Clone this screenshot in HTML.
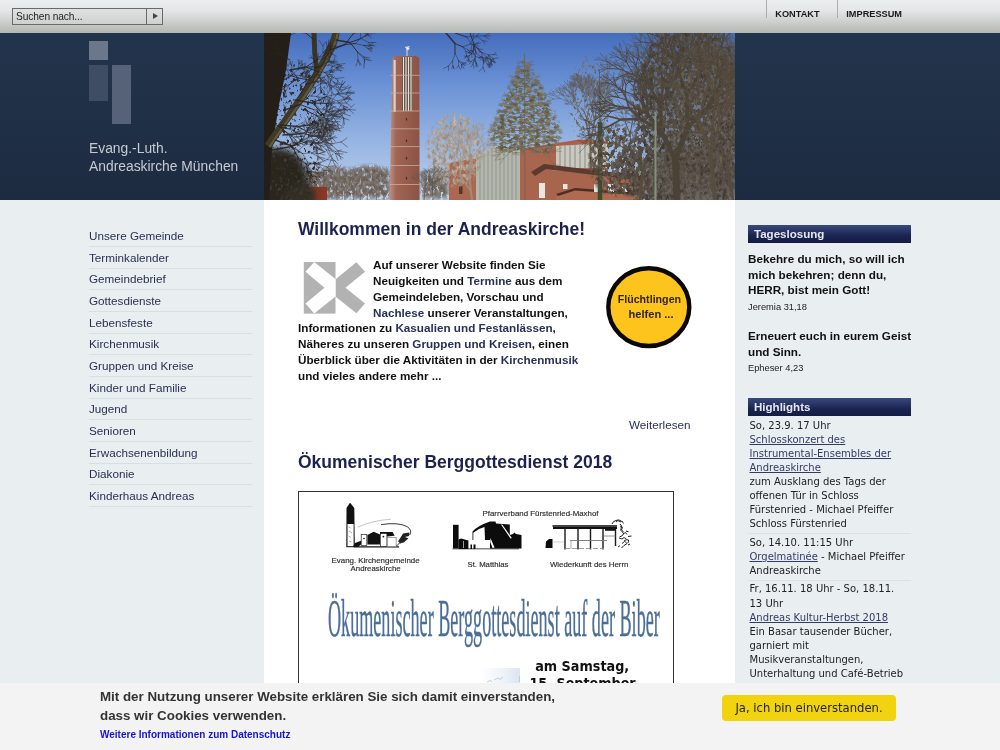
<!DOCTYPE html>
<html lang="de">
<head>
<meta charset="utf-8">
<title>Evang.-Luth. Andreaskirche München</title>
<style>
*{box-sizing:border-box;margin:0;padding:0}
html,body{width:1000px;height:750px;overflow:hidden}
body{background:#e9eef0;font-family:"Liberation Sans",Arial,sans-serif;color:#111;position:relative}
a{color:#2a3058;text-decoration:none}
#topbar{position:absolute;left:0;top:0;width:1000px;height:33px;background:linear-gradient(#ebeeef 0,#e5e8e8 30%,#d0d2d1 62%,#b5b6b3 100%)}
#search{position:absolute;left:12px;top:8px;width:151px;height:17px;border:1px solid #6a6a6a;background:linear-gradient(#e0e2e2,#cfd0d0);font-size:10.2px;line-height:15px;padding-left:3px;color:#222;letter-spacing:-.1px}
#search i{position:absolute;right:0;top:0;width:16px;height:15px;border-left:1px solid #6a6a6a}
#search i:after{content:"";position:absolute;left:6px;top:4px;border-left:5px solid #444;border-top:3.5px solid transparent;border-bottom:3.5px solid transparent}
#topnav a{position:absolute;top:0;height:18px;border-left:1px solid #acaeae;font-size:9.2px;font-weight:bold;color:#1a1a1a;line-height:28.4px;padding-left:8.3px;white-space:nowrap}
#header{position:absolute;left:0;top:33px;width:1000px;height:167px;background:linear-gradient(#22344c,#1d2b40)}
#logo div{position:absolute;background:#4a586c}
#sitename{position:absolute;left:89px;top:106.4px;font-size:13.85px;line-height:18px;color:#c5cbd3;white-space:nowrap}
#photo{position:absolute;left:264px;top:33px;width:471px;height:167px;overflow:hidden}
#main{position:absolute;left:264px;top:200px;width:471px;height:550px;background:#fff}
#nav{position:absolute;left:89px;top:225px;width:163px}
#nav a{position:absolute;left:0;width:163px;height:22px;line-height:21px;font-size:11.7px;color:#2a3052;border-bottom:1px solid #d9dee0;white-space:nowrap}
h1{position:absolute;left:298px;font-size:17.5px;font-weight:bold;color:#1b2250;white-space:nowrap;line-height:22px}
#intro{position:absolute;left:298px;top:257px;width:300px;font-size:11.7px;line-height:15.85px;font-weight:bold;color:#111}
#intro a{color:#2a3058}
#intro p{white-space:nowrap}
.side h3{position:absolute;left:748px;width:163px;height:18px;background:linear-gradient(#3a4a7c,#1a2452 60%,#141c44);color:#e6e7f1;font-size:11.55px;line-height:18px;padding-left:6px;font-weight:bold}
.los{position:absolute;left:748px;font-size:11.7px;font-weight:bold;line-height:15.7px;color:#111;white-space:nowrap}
.ref{position:absolute;left:748px;font-size:9.3px;color:#222;white-space:nowrap}
.hl{position:absolute;left:749.5px;width:161px;font-family:"DejaVu Sans",Verdana,sans-serif;font-size:10px;line-height:14.11px;color:#222;white-space:nowrap}
.hl a{color:#343a66;text-decoration:underline}
.hl hr{border:0;border-top:1px solid #dde1e3;margin:1.65px 0 1.65px -1.5px}
#cookie{position:absolute;left:0;top:683px;width:1000px;height:67px;background:#f3f3f3}
#cookie p{position:absolute;left:100px;top:4px;font-size:13.35px;font-weight:bold;line-height:19px;color:#333;white-space:nowrap}
#cookie a{position:absolute;left:100px;top:45.5px;font-size:10px;font-weight:bold;color:#1414d8;white-space:nowrap}
#cookie b{position:absolute;left:722px;top:12px;width:174px;height:26px;border-radius:4px;background:#f2d30f;font-family:"DejaVu Sans",sans-serif;font-weight:normal;font-size:11.6px;line-height:26px;text-align:center;color:#222}
#flyer{position:absolute;left:298px;top:491px;width:376px;height:200px;border:1px solid #333;border-bottom:0;background:#fff;overflow:hidden}
#wrap{position:absolute;left:0;top:0;width:1000px;height:750px;will-change:transform}
</style>
</head>
<body>
<div id="wrap">
<div id="topbar">
  <div id="search">Suchen nach...<i></i></div>
  <div id="topnav"><a style="left:766px">KONTAKT</a><a style="left:837px">IMPRESSUM</a></div>
</div>
<div id="header">
  <div id="logo"><div style="left:89px;top:8px;width:19px;height:19px;background:#6b778a"></div><div style="left:89px;top:31.5px;width:19px;height:36px;background:#3e4d63"></div><div style="left:112px;top:31.5px;width:19px;height:59px;background:#566277"></div></div>
  <div id="sitename">Evang.-Luth.<br>Andreaskirche München</div>
</div>
<!--PHOTO--><svg id="photo" width="471" height="167" viewBox="264 33 471 167" style="position:absolute;left:264px;top:33px">
<defs><linearGradient id="sky" x1="0" y1="0" x2="0" y2="1"><stop offset="0" stop-color="#446dbc"/><stop offset=".3" stop-color="#6a91d5"/><stop offset=".65" stop-color="#97b5e3"/><stop offset="1" stop-color="#bdd1ec"/></linearGradient><filter id="bl3" x="-20%" y="-20%" width="140%" height="140%"><feGaussianBlur stdDeviation="3"/></filter><filter id="bl6" x="-30%" y="-30%" width="160%" height="160%"><feGaussianBlur stdDeviation="7"/></filter><linearGradient id="tw" x1="0" y1="0" x2="1" y2="0"><stop offset="0" stop-color="#bd917f"/><stop offset=".22" stop-color="#a06554"/><stop offset="1" stop-color="#8c5243"/></linearGradient>
<filter id="tBrown" x="-15%" y="-15%" width="130%" height="130%" color-interpolation-filters="sRGB"><feGaussianBlur in="SourceAlpha" stdDeviation="4" result="m"/><feTurbulence type="fractalNoise" baseFrequency="0.26 0.19" numOctaves="3" seed="4" result="n"/><feColorMatrix in="n" type="matrix" values="0 0 0.3 0 0.2 0 0 0.3 0 0.165 0 0 0.3 0 0.125 0 0 0 0 1" result="c"/><feColorMatrix in="n" type="matrix" values="0 0 0 0 0 0 0 0 0 0 0 0 0 0 0 0 9 0 0 -3.8" result="a"/><feComposite in="a" in2="m" operator="arithmetic" k1="0" k2="1" k3="2.5" k4="-2.5" result="a2"/><feComposite in="c" in2="a2" operator="in"/></filter>
<filter id="tDense" x="-15%" y="-15%" width="130%" height="130%" color-interpolation-filters="sRGB"><feGaussianBlur in="SourceAlpha" stdDeviation="5" result="m"/><feTurbulence type="fractalNoise" baseFrequency="0.26 0.19" numOctaves="3" seed="9" result="n"/><feColorMatrix in="n" type="matrix" values="0 0 0.27 0 0.17 0 0 0.27 0 0.145 0 0 0.27 0 0.12 0 0 0 0 1" result="c"/><feColorMatrix in="n" type="matrix" values="0 0 0 0 0 0 0 0 0 0 0 0 0 0 0 0 10 0 0 -3.9" result="a"/><feComposite in="a" in2="m" operator="arithmetic" k1="0" k2="1" k3="3" k4="-3.0" result="a2"/><feComposite in="c" in2="a2" operator="in"/></filter>
<filter id="tLight" x="-15%" y="-15%" width="130%" height="130%" color-interpolation-filters="sRGB"><feGaussianBlur in="SourceAlpha" stdDeviation="3" result="m"/><feTurbulence type="fractalNoise" baseFrequency="0.3 0.2" numOctaves="3" seed="5" result="n"/><feColorMatrix in="n" type="matrix" values="0 0 0.35 0 0.5 0 0 0.35 0 0.45 0 0 0.35 0 0.4 0 0 0 0 1" result="c"/><feColorMatrix in="n" type="matrix" values="0 0 0 0 0 0 0 0 0 0 0 0 0 0 0 0 5 0 0 -1.85" result="a"/><feComposite in="a" in2="m" operator="arithmetic" k1="0" k2="1" k3="1.5" k4="-1.5" result="a2"/><feComposite in="c" in2="a2" operator="in"/></filter>
<filter id="tOlive" x="-15%" y="-15%" width="130%" height="130%" color-interpolation-filters="sRGB"><feGaussianBlur in="SourceAlpha" stdDeviation="3" result="m"/><feTurbulence type="fractalNoise" baseFrequency="0.2 0.3" numOctaves="3" seed="6" result="n"/><feColorMatrix in="n" type="matrix" values="0 0 0.35 0 0.28 0 0 0.35 0 0.26 0 0 0.35 0 0.18 0 0 0 0 1" result="c"/><feColorMatrix in="n" type="matrix" values="0 0 0 0 0 0 0 0 0 0 0 0 0 0 0 0 7 0 0 -2.7" result="a"/><feComposite in="a" in2="m" operator="arithmetic" k1="0" k2="1" k3="2" k4="-2.0" result="a2"/><feComposite in="c" in2="a2" operator="in"/></filter>
<filter id="tGray" x="-15%" y="-15%" width="130%" height="130%" color-interpolation-filters="sRGB"><feGaussianBlur in="SourceAlpha" stdDeviation="3" result="m"/><feTurbulence type="fractalNoise" baseFrequency="0.3 0.22" numOctaves="3" seed="7" result="n"/><feColorMatrix in="n" type="matrix" values="0 0 0.3 0 0.32 0 0 0.3 0 0.28 0 0 0.3 0 0.25 0 0 0 0 1" result="c"/><feColorMatrix in="n" type="matrix" values="0 0 0 0 0 0 0 0 0 0 0 0 0 0 0 0 6 0 0 -1.6" result="a"/><feComposite in="a" in2="m" operator="arithmetic" k1="0" k2="1" k3="1.5" k4="-1.5" result="a2"/><feComposite in="c" in2="a2" operator="in"/></filter>
<filter id="tDark" x="-15%" y="-15%" width="130%" height="130%" color-interpolation-filters="sRGB"><feGaussianBlur in="SourceAlpha" stdDeviation="4" result="m"/><feTurbulence type="fractalNoise" baseFrequency="0.3 0.24" numOctaves="3" seed="8" result="n"/><feColorMatrix in="n" type="matrix" values="0 0 0.25 0 0.08 0 0 0.25 0 0.07 0 0 0.25 0 0.07 0 0 0 0 1" result="c"/><feColorMatrix in="n" type="matrix" values="0 0 0 0 0 0 0 0 0 0 0 0 0 0 0 0 9 0 0 -5.0" result="a"/><feComposite in="a" in2="m" operator="arithmetic" k1="0" k2="1" k3="2.5" k4="-2.5" result="a2"/><feComposite in="c" in2="a2" operator="in"/></filter>
<filter id="tThin" x="-15%" y="-15%" width="130%" height="130%" color-interpolation-filters="sRGB"><feGaussianBlur in="SourceAlpha" stdDeviation="3" result="m"/><feTurbulence type="fractalNoise" baseFrequency="0.34 0.26" numOctaves="3" seed="12" result="n"/><feColorMatrix in="n" type="matrix" values="0 0 0.3 0 0.3 0 0 0.3 0 0.27 0 0 0.3 0 0.25 0 0 0 0 1" result="c"/><feColorMatrix in="n" type="matrix" values="0 0 0 0 0 0 0 0 0 0 0 0 0 0 0 0 8 0 0 -4.3" result="a"/><feComposite in="a" in2="m" operator="arithmetic" k1="0" k2="1" k3="2" k4="-2.0" result="a2"/><feComposite in="c" in2="a2" operator="in"/></filter>
</defs>
<rect x="264" y="33" width="471" height="167" fill="url(#sky)"/>
<g filter="url(#tGray)"><path d="M300 200L305 175Q330 160 350 168Q375 158 392 172L392 200Z"/><path d="M420 200V175Q432 165 450 172V200Z"/></g>
<g fill="none" stroke="#6e6258" stroke-linecap="round" opacity="0.7"><path stroke-width="1.0" d="M312 200l-0.5 -12.5M320 200l-0.5 -9.5M326.5 200l-0.5 -9.5M337 200l-0.5 -12M345 200l-1 -11.5M353.5 200l0.5 -9.5M360.5 200l-0.5 -12M367.5 200l-0.5 -9M376.5 200l0 -11M384 200l-1.5 -12"/><path stroke-width="0.5" d="M311.5 187.5l4.5 -9.5M316 178l6.5 -4M322.5 174l5 0.5M322.5 174l4 -4.5M316 178l-0.5 -6M315.5 172l1.5 -5M315.5 172l0 -4M315.5 172l-1.5 -4.5M311.5 187.5l1 -8.5M312.5 179l3.5 -5M316 174l4.5 -3M316 174l2.5 -4.5M316 174l0.5 -5M312.5 179l-1.5 -5M311 174l0.5 -3.5M311 174l-2 -3M311.5 187.5l-3 -9.5M308.5 178l1.5 -6.5M310 171.5l3 -5M310 171.5l0 -4.5M308.5 178l-3.5 -6.5M305 171.5l0.5 -5.5M305 171.5l-1.5 -5.5M305 171.5l-3.5 -3.5M308.5 178l-4 -6M304.5 172l0 -5.5M304.5 172l-4 -3M319.5 190.5l1.5 -7.5M321 183l3 -4M324 179l2.5 -2M324 179l2 -3.5M324 179l0.5 -4M321 183l2 -5M323 178l3 -1.5M323 178l0 -2.5M321 183l-1.5 -6.5M319.5 176.5l1.5 -3.5M319.5 176.5l-1 -3.5M319.5 176.5l-3 -3M319.5 190.5l-4 -7.5M315.5 183l-0.5 -5M315 178l1 -3M315 178l-1.5 -4M315 178l-2 -3M315.5 183l-3.5 -5.5M312 177.5l-1 -5M312 177.5l-3.5 -2.5M315.5 183l-3.5 -3.5M312 179.5l-1 -4M312 179.5l-2.5 -3M312 179.5l-3 -1M326 190.5l3 -6.5M329 184l4.5 -3.5M333.5 180.5l3.5 -0.5M333.5 180.5l2 -3M329 184l0.5 -4.5M329.5 179.5l2 -2M329.5 179.5l-1 -3M326 190.5l-3.5 -5.5M322.5 185l-1 -5.5M321.5 179.5l0.5 -4M321.5 179.5l-1 -3M321.5 179.5l-2.5 -3M322.5 185l-4.5 -2M318 183l-1.5 -2.5M318 183l-3.5 0.5M336.5 188l4 -8.5M340.5 179.5l4.5 -5M345 174.5l4 -2M345 174.5l1 -4M340.5 179.5l-0.5 -7M340 172.5l2.5 -4M340 172.5l-2 -4.5M336.5 188l0 -10.5M336.5 177.5l3.5 -7M340 170.5l5 -3.5M340 170.5l0.5 -5M336.5 177.5l1 -8M337.5 169.5l4 -5.5M337.5 169.5l-2 -5.5M336.5 177.5l-2 -6.5M334.5 171l1 -5M334.5 171l-3.5 -4M336.5 188l-4 -7M332.5 181l-0.5 -5M332 176l0.5 -4M332 176l0 -3.5M332 176l-2 -4M332.5 181l-2 -4.5M330.5 176.5l-0.5 -4M330.5 176.5l-2 -4M330.5 176.5l-2.5 -2.5M332.5 181l-4.5 -3M328 178l-2 -3M328 178l-4 -1M344 188.5l3 -6M347 182.5l3.5 -3M350.5 179.5l4 -0.5M350.5 179.5l2.5 -1M350.5 179.5l1.5 -2.5M347 182.5l0 -4.5M347 178l1 -3.5M347 178l-1 -2.5M344 188.5l-1 -8.5M343 180l1 -6.5M344 173.5l2.5 -4M344 173.5l-1.5 -5M343 180l-1 -5.5M342 174.5l1.5 -3M342 174.5l-2 -3M343 180l-4 -6M339 174l-1.5 -5M339 174l-2.5 -4M339 174l-4.5 -1.5M344 188.5l-4 -6.5M340 182l0 -5.5M340 176.5l1.5 -3.5M340 176.5l0 -4M340 176.5l-2.5 -3M340 182l-4 -2M336 180l-3 -3M336 180l-3.5 -2M336 180l-4 -0.5M354 190.5l3 -5.5M357 185l3.5 -2M360.5 183l2.5 0M360.5 183l1.5 -2.5M357 185l2 -4M359 181l2.5 -2.5M359 181l1 -3M359 181l0.5 -3.5M357 185l1 -5M358 180l2.5 -3.5M358 180l-1 -3M354 190.5l0.5 -7.5M354.5 183l2.5 -4M357 179l3 -1.5M357 179l2 -2.5M357 179l0.5 -2.5M354.5 183l-3 -4.5M351.5 178.5l-0.5 -4.5M351.5 178.5l-1 -3M351.5 178.5l-3.5 -3M354 190.5l-3 -7M351 183.5l0.5 -5.5M351.5 178l3 -3.5M351.5 178l-2 -4M351 183.5l-2 -4.5M349 179l0 -4M349 179l-1 -3.5M349 179l-2 -2.5M351 183.5l-4.5 -4.5M346.5 179l-1 -3.5M346.5 179l-2.5 -3M346.5 179l-4.5 -1.5M360 188l4.5 -7.5M364.5 180.5l6 -4M370.5 176.5l6 -0.5M370.5 176.5l3 -5M364.5 180.5l1.5 -6.5M366 174l2 -4.5M366 174l1.5 -6M366 174l-1 -6M360 188l-1.5 -7M358.5 181l1.5 -4.5M360 176.5l3 -2M360 176.5l1.5 -3M360 176.5l0 -3M358.5 181l-3 -3.5M355.5 177.5l-1 -3M355.5 177.5l-3 -0.5M360 188l-5 -7M355 181l-1 -7M354 174l1 -5M354 174l-2.5 -5M355 181l-4.5 -6M350.5 175l0 -5M350.5 175l-3 -5.5M350.5 175l-6 -2M355 181l-4.5 -3.5M350.5 177.5l-1 -3.5M350.5 177.5l-3 -2.5M350.5 177.5l-3.5 -1M367 191l3.5 -6M370.5 185l3.5 -2M374 183l3.5 0M374 183l1.5 -2M370.5 185l2 -4.5M372.5 180.5l2.5 -2.5M372.5 180.5l1.5 -3.5M372.5 180.5l-0.5 -3.5M370.5 185l1 -5M371.5 180l2 -3M371.5 180l-1.5 -3.5M367 191l-3.5 -6.5M363.5 184.5l-0.5 -5.5M363 179l1 -3.5M363 179l-2 -4M363.5 184.5l-5.5 -2M358 182.5l-3 -4M358 182.5l-4.5 0.5M376.5 189l3.5 -7.5M380 181.5l4.5 -4.5M384.5 177l3.5 -0.5M384.5 177l2 -4M380 181.5l-0.5 -6.5M379.5 175l2.5 -3M379.5 175l0.5 -4M379.5 175l-2 -3.5M376.5 189l-0.5 -9M376 180l3 -7M379 173l4 -3.5M379 173l-1.5 -5M376 180l-3.5 -5M372.5 175l-1.5 -4.5M372.5 175l-4 -2M376.5 189l-3.5 -6.5M373 182.5l0 -5.5M373 177l1 -3M373 177l-1 -3.5M373 177l-2 -2.5M373 182.5l-3 -5M370 177.5l0 -4M370 177.5l-2.5 -2.5M373 182.5l-4 -3.5M369 179l-1.5 -4.5M369 179l-3 -3M369 179l-4 -0.5M382.5 188l4.5 -9M387 179l5 -4M392 175l3.5 -0.5M392 175l3.5 -2M392 175l2 -3.5M387 179l-0.5 -7M386.5 172l2 -5M386.5 172l0 -5.5M386.5 172l-2.5 -3.5M382.5 188l0 -7M382.5 181l3 -5.5M385.5 175.5l4 -2M385.5 175.5l2 -4M385.5 175.5l0.5 -4M382.5 181l0 -6.5M382.5 174.5l1.5 -3.5M382.5 174.5l-1 -4M382.5 181l-3 -5M379.5 176l0.5 -4M379.5 176l-3.5 -2.5M382.5 188l-3.5 -7M379 181l0 -5M379 176l2.5 -3.5M379 176l0 -3.5M379 176l-1 -4M379 181l-2.5 -5M376.5 176l-0.5 -5M376.5 176l-3.5 -2.5M379 181l-4 -4M375 177l-1.5 -5M375 177l-3.5 -2.5M375 177l-4.5 -1.5"/></g>
<rect x="304" y="187" width="23" height="13" fill="#8b3626"/>
<polygon points="392.5,58 396,56 416,56 419.3,58 419.6,200 389.6,200" fill="url(#tw)"/>
<rect x="393.5" y="60" width="2.2" height="52" fill="#e6dcd2" opacity=".9"/>
<rect x="402" y="57" width="10" height="54" fill="#5a4a40"/>
<path d="M403.5 57V111M406 57V111M408.5 57V111M411 57V111" stroke="#e8e4dc" stroke-width="1.2"/>
<path d="M390.5 75.3H419.5M390.5 93H419.5M390.5 111H419.5M390.3 128.8H419.5M390 146.6H419.5M390 165.5H419.5M389.8 184.5H419.5" stroke="#cdb5a5" stroke-width=".9" opacity=".8"/>
<path d="M406.5 118v2.5M406.5 139.5v2.5M406.5 157v2.5M406.5 177v2.5" stroke="#4a2e26" stroke-width="1.2"/>
<path d="M407 56V47M405 47.5L409.5 46.5" stroke="#ddd" stroke-width="1"/><circle cx="407.8" cy="48.5" r="1.6" fill="#e8e8e0"/>
<polygon points="449,163 476,158 476,200 449,200" fill="#ab6850"/>
<polygon points="476,158 493,146 520,150 520,200 476,200" fill="#b4b7ae"/>
<path d="M480 156V200M484 153V200M488 150V200M492 148V200M496 148V200M500 148V200M504 149V200M508 149V200M512 150V200M516 150V200" stroke="#8f948c" stroke-width="1"/>
<polygon points="520,150 545,146 580,140 608,142 608,170 520,170" fill="#a9664e"/>
<polygon points="556,146 608,143 608,168 556,168" fill="#c9c9c1"/>
<path d="M560 146V168M565 146V168M570 145V168M575 145V168M580 145V168M585 144V168M590 144V168M595 144V168M600 144V168M605 144V168" stroke="#9a9a92" stroke-width="1.3"/>
<path d="M520 150L545 146L580 140.5L608 142.5" stroke="#b5583c" stroke-width="2" fill="none"/>
<polygon points="520,168 642,176 642,200 520,200" fill="#a8644c"/>
<polygon points="531,172 544,164 642,176 642,181 546,169 535,176" fill="#5b3a30"/>
<polygon points="556,194 575,188 642,194 642,200 556,200" fill="#b06a50"/>
<polygon points="556,194 575,188 642,193 642,195.5 575,190.5 558,196" fill="#4a2f28"/>
<rect x="539" y="183" width="6" height="15" fill="#e8e6e0"/><rect x="563" y="184" width="4.5" height="5" fill="#e8e6e0"/><rect x="608" y="184" width="6" height="8" fill="#ddd"/><rect x="622" y="184" width="5" height="8" fill="#ddd"/><rect x="594" y="184" width="4" height="8" fill="#ddd"/>
<rect x="459" y="186" width="3.5" height="8" fill="#5a3528"/>
<g filter="url(#tLight)"><ellipse cx="455" cy="150" rx="30" ry="38"/></g>
<g fill="none" stroke="#a09384" stroke-linecap="round" opacity="0.85"><path stroke-width="2.0" d="M472 200l-2.5 -22"/><path stroke-width="1.5" d="M469.5 178l3.5 -13.5M469.5 178l1 -18.5M469.5 178l-7 -15.5M470 190l-9 -13"/><path stroke-width="1.0" d="M473 164.5l7 -7.5M473 164.5l-3.5 -10.5M470.5 159.5l9.5 -12M470.5 159.5l-1.5 -14.5M470.5 159.5l-5.5 -10.5M462.5 162.5l1.5 -13M462.5 162.5l-9.5 -10.5M461 177l-0.5 -11M461 177l-11 -4.5"/><path stroke-width="0.5" d="M480 157l8 -2.5M488 154.5l7 1.5M495 156l4.5 3.5M495 156l5 -1.5M488 154.5l3.5 -4.5M491.5 150l3.5 -1.5M491.5 150l2.5 -3.5M491.5 150l0.5 -5M480 157l4 -6.5M484 150.5l4.5 -2.5M488.5 148l4.5 0.5M488.5 148l3 -3M484 150.5l3.5 -5.5M487.5 145l3.5 -2.5M487.5 145l2 -4M487.5 145l1 -4.5M484 150.5l0 -5M484 145.5l1.5 -3M484 145.5l-1 -3.5M480 157l3.5 -8M483.5 149l6 -3.5M489.5 145.5l4 0M489.5 145.5l2.5 -3.5M483.5 149l4 -6M487.5 143l4.5 -3M487.5 143l1 -4M483.5 149l-1 -6.5M482.5 142.5l2 -4.5M482.5 142.5l-1.5 -5M482.5 142.5l-2.5 -4M469.5 154l2 -9M471.5 145l3.5 -6M475 139l5 -4.5M475 139l0 -6M471.5 145l0.5 -7M472 138l3 -6M472 138l1 -5M472 138l-2 -5.5M471.5 145l-1.5 -6M470 139l1.5 -5.5M470 139l-1 -5M470 139l-2.5 -3.5M469.5 154l-7.5 -5.5M462 148.5l-2 -6.5M460 142l1 -4.5M460 142l-3.5 -4M462 148.5l-5.5 -4M456.5 144.5l-3 -5M456.5 144.5l-6 -1M462 148.5l-7 0M455 148.5l-5 -2M455 148.5l-6.5 -0.5M455 148.5l-5.5 3M480 147.5l11 -7.5M491 140l8 -2M499 138l6.5 1M499 138l3.5 -4.5M491 140l8 -4.5M499 135.5l7.5 0M499 135.5l5 -6M491 140l3 -8M494 132l4 -3M494 132l2 -5M494 132l0.5 -7M480 147.5l7.5 -7.5M487.5 140l8 -2M495.5 138l6 1M495.5 138l5.5 -3M487.5 140l5 -5.5M492.5 134.5l5 -2M492.5 134.5l1 -4.5M487.5 140l1.5 -6.5M489 133.5l2.5 -3.5M489 133.5l0 -4.5M489 133.5l-1 -4M480 147.5l3 -11.5M483 136l6.5 -6.5M489.5 129.5l7 -2.5M489.5 129.5l2 -7.5M483 136l-0.5 -8.5M482.5 127.5l2 -5.5M482.5 127.5l0 -5M482.5 127.5l-4 -5.5M469 145l5 -9.5M474 135.5l5.5 -6M479.5 129.5l5.5 -1M479.5 129.5l1.5 -5.5M474 135.5l2 -7.5M476 128l4 -4M476 128l3 -5.5M476 128l0 -6M474 135.5l0.5 -6.5M474.5 129l2.5 -5M474.5 129l-1 -4.5M469 145l-4 -8.5M465 136.5l0 -6.5M465 130l1 -4M465 130l0 -4.5M465 130l-3 -4M465 136.5l-4 -6M461 130.5l-0.5 -5M461 130.5l-3 -4M461 130.5l-5 -2M465 136.5l-4.5 -4.5M460.5 132l-1.5 -3.5M460.5 132l-3 -3M460.5 132l-5 -0.5M465 149l0 -8.5M465 140.5l2 -5M467 135.5l2.5 -2M467 135.5l-0.5 -4.5M465 140.5l-2.5 -5.5M462.5 135l0.5 -4.5M462.5 135l-2 -4M462.5 135l-3 -3M465 149l-4.5 -6M460.5 143l-1 -5.5M459.5 137.5l0.5 -3M459.5 137.5l-1 -3M459.5 137.5l-2.5 -2M460.5 143l-6 -3M454.5 140l-3.5 -4M454.5 140l-4.5 0M465 149l-9 -5M456 144l-4 -7M452 137l-0.5 -6.5M452 137l-2.5 -4.5M452 137l-4 -3M456 144l-6.5 -0.5M449.5 143.5l-4 -3M449.5 143.5l-5 -0.5M449.5 143.5l-4.5 2M464 149.5l5 -7.5M469 142l5.5 -4M474.5 138l5.5 -1.5M474.5 138l4 -3M474.5 138l2.5 -5.5M469 142l3.5 -6M472.5 136l3.5 -2M472.5 136l2 -4.5M472.5 136l0.5 -5M469 142l1 -6.5M470 135.5l2.5 -5M470 135.5l1 -5M470 135.5l-1.5 -5M464 149.5l-5 -8M459 141.5l-0.5 -6.5M458.5 135l1.5 -5M458.5 135l-1 -5M458.5 135l-3 -4M459 141.5l-6 -4M453 137.5l-2 -5.5M453 137.5l-6 -0.5M453 152l-4 -10M449 142l1.5 -7M450.5 135l3.5 -3M450.5 135l1.5 -5M450.5 135l-1 -4.5M449 142l-3.5 -6.5M445.5 135.5l1 -6M445.5 135.5l-2 -5M445.5 135.5l-5.5 -3M449 142l-5.5 -4.5M443.5 137.5l-3 -5M443.5 137.5l-3.5 -4M443.5 137.5l-6 -1M453 152l-9.5 -5.5M443.5 146.5l-4 -6.5M439.5 140l-1 -5M439.5 140l-6 -2M443.5 146.5l-8 -1M435.5 145.5l-5 -4.5M435.5 145.5l-5 2.5M460.5 166l4 -8M464.5 158l5 -4M469.5 154l4 -1M469.5 154l2.5 -4.5M464.5 158l3 -5.5M467.5 152.5l3 -2M467.5 152.5l-1 -3.5M464.5 158l-0.5 -5M464 153l1.5 -4M464 153l-0.5 -3.5M464 153l-2.5 -3M460.5 166l-3.5 -8.5M457 157.5l1 -7M458 150.5l4 -5.5M458 150.5l-1 -4.5M457 157.5l-5 -2.5M452 155l-2 -4M452 155l-4 -1M450 172.5l-7 -7.5M443 165l-1.5 -6M441.5 159l0.5 -4.5M441.5 159l-2 -5M441.5 159l-3.5 -3.5M443 165l-7 -1.5M436 163.5l-3.5 -4.5M436 163.5l-5.5 -1M436 163.5l-4.5 1.5M450 172.5l-7.5 -0.5M442.5 172l-5 -2M437.5 170l-2.5 -2.5M437.5 170l-3 -2M437.5 170l-4 0.5M442.5 172l-5.5 0.5M437 172.5l-3 -2M437 172.5l-4 1.5M442.5 172l-4.5 2M438 174l-4 -0.5M438 174l-3 1M438 174l-3 3"/></g>
<g fill="none" stroke="#5d554c" stroke-linecap="round" opacity="0.8"><path stroke-width="1.0" d="M433 200l-0.5 -12M432.5 188l4.5 -7M432.5 188l0 -8.5M432.5 188l-3 -7M424 200l1 -10"/><path stroke-width="0.5" d="M437 181l5 -4M442 177l5.5 -0.5M447.5 176.5l3 1.5M447.5 176.5l2.5 -1.5M442 177l3 -4.5M445 172.5l3.5 -1.5M445 172.5l0.5 -4.5M437 181l2.5 -6M439.5 175l3 -2.5M442.5 172.5l2.5 -0.5M442.5 172.5l1.5 -2.5M439.5 175l-1 -5.5M438.5 169.5l1.5 -3M438.5 169.5l-2 -2.5M437 181l1 -6.5M438 174.5l2.5 -3.5M440.5 171l3.5 -2M440.5 171l1 -3M438 174.5l-0.5 -4.5M437.5 170l1 -3.5M437.5 170l-2.5 -3M432.5 179.5l1.5 -5.5M434 174l2 -2.5M436 171.5l2.5 -0.5M436 171.5l2 -1M436 171.5l1 -2M434 174l0.5 -4M434.5 170l1.5 -2M434.5 170l0 -3.5M434.5 170l-0.5 -3M434 174l-1 -3.5M433 170.5l0 -2.5M433 170.5l-1 -2M433 170.5l-1.5 -2M432.5 179.5l-3 -5M429.5 174.5l-0.5 -4M429 170.5l1.5 -2M429 170.5l-1 -2M429.5 174.5l-3.5 -3M426 171.5l-1 -3M426 171.5l-2.5 -3M426 171.5l-3 -1M429.5 181l0 -5M429.5 176l1.5 -2.5M431 173.5l2 -1.5M431 173.5l0.5 -2.5M429.5 176l0 -3.5M429.5 172.5l1 -2.5M429.5 172.5l-1.5 -2.5M429.5 176l-2 -3.5M427.5 172.5l-0.5 -2.5M427.5 172.5l-2 -1M429.5 181l-2.5 -4.5M427 176.5l0 -4.5M427 172l2 -2M427 172l-1 -2.5M427 176.5l-2 -3M425 173.5l-0.5 -3M425 173.5l-2 -1.5M427 176.5l-3 -3M424 173.5l-1.5 -2.5M424 173.5l-2.5 -2.5M424 173.5l-3 -1.5M429.5 181l-4 -4M425.5 177l-1 -3.5M424.5 173.5l1 -2M424.5 173.5l-0.5 -2.5M424.5 173.5l-1.5 -2M425.5 177l-3 -2.5M422.5 174.5l-1.5 -3M422.5 174.5l-2 -2M422.5 174.5l-3 -0.5M425.5 177l-3.5 -1M422 176l-2 -2M422 176l-2.5 -1.5M422 176l-3.5 0M425 190l4 -5M429 185l4 -1.5M433 183.5l2.5 0.5M433 183.5l2.5 -2M429 185l2.5 -2.5M431.5 182.5l2.5 -0.5M431.5 182.5l1.5 -2.5M431.5 182.5l1.5 -2.5M429 185l0.5 -4.5M429.5 180.5l1.5 -2.5M429.5 180.5l1 -4M429.5 180.5l-1 -3.5M425 190l1 -6M426 184l3.5 -3.5M429.5 180.5l3 -1.5M429.5 180.5l2.5 -2.5M429.5 180.5l1 -3.5M426 184l-1 -4.5M425 179.5l0 -3.5M425 179.5l-3 -2.5M425 190l-4 -7.5M421 182.5l1 -5.5M422 177l2.5 -3.5M422 177l0.5 -4M422 177l-1 -4M421 182.5l-3 -5M418 177.5l-1 -4.5M418 177.5l-2.5 -3.5M418 177.5l-4 -3.5M421 182.5l-5.5 -3.5M415.5 179l-2.5 -3M415.5 179l-4 -2M415.5 179l-4 -1"/></g>
<g filter="url(#tOlive)"><polygon points="524,52 500,98 486,136 498,156 552,156 566,134 548,92"/></g>
<g fill="none" stroke="#6a614c" stroke-linecap="round" opacity="0.75"><path stroke-width="1.0" d="M525 200l-0.5 -146M524.5 61.5l-3.5 0.5M524.5 62.5l4 0.5M524.5 65.5l-3 1M524.5 65l3.5 0M524.5 69.5l-4 0M524.5 71l4 0.5M524.5 73l-5 1M524.5 74.5l4.5 0.5M524.5 78.5l-7 0M524.5 78.5l7 0.5M524.5 82l-5 0.5M524.5 83.5l7 0.5M524.5 86.5l-7 0M524.5 87l7.5 0M524.5 93.5l-8 2.5M524.5 93.5l9 2M524.5 97l-8 2.5M524.5 96.5l10.5 1M524.5 99l-9.5 -0.5M524.5 101.5l8.5 0M524.5 104l-9.5 -0.5M524.5 104l12 2.5M524.5 110l-9 0M524.5 108.5l10.5 3.5M524.5 112l-10.5 2M524.5 112.5l14 1M524.5 117.5l-10 -0.5M524.5 115.5l14.5 3.5M524.5 123l-14 2M524.5 122l10 3M524.5 127.5l-14.5 1M524.5 125.5l11.5 3.5M524.5 130.5l-14 0M524.5 130l12 1M524.5 135l-17.5 0M524.5 134.5l16 1.5M524.5 138l-16 5.5M524.5 138l12.5 4.5M524.5 144l-17 4.5M524.5 142.5l13 3.5M524.5 147l-13.5 4.5M524.5 148.5l19 4.5"/><path stroke-width="0.5" d="M521 62l-2.5 -0.5M518.5 61.5l-1 -1M518.5 61.5l-1.5 0.5M521 62l-2 1.5M519 63.5l-2 0M519 63.5l-1 1M528.5 63l3 1.5M531.5 64.5l1 1.5M531.5 64.5l2.5 0M528.5 63l2.5 -1M531 62l2 0M531 62l1 -1.5M521.5 66.5l-3 -0.5M518.5 66l-1.5 -0.5M518.5 66l-1.5 1M521.5 66.5l-2 1M519.5 67.5l-1 0.5M519.5 67.5l-0.5 1.5M528 65l1.5 1M529.5 66l1 1M529.5 66l1.5 0M528 65l2 -0.5M530 64.5l1 0M530 64.5l1 -1M520.5 69.5l-3 -1M517.5 68.5l-1.5 -1.5M517.5 68.5l-2 0M520.5 69.5l-2.5 1M518 70.5l-2 -0.5M518 70.5l-1 1M528.5 71.5l3 1M531.5 72.5l1.5 1.5M531.5 72.5l2.5 0M528.5 71.5l3.5 -1.5M532 70l2 0.5M532 70l2 -1.5M519.5 74l-3 -0.5M516.5 73.5l-1.5 -1M516.5 73.5l-1.5 0M519.5 74l-2.5 2M517 76l-2.5 0.5M517 76l-1.5 2M529 75l2.5 2M531.5 77l0.5 1.5M531.5 77l1.5 0.5M529 75l3 0M532 75l2 0.5M532 75l2 -1M517.5 78.5l-5 -1.5M512.5 77l-2.5 -2M512.5 77l-4 0M517.5 78.5l-4.5 3M513 81.5l-3.5 0.5M513 81.5l-2.5 3M531.5 79l4.5 1.5M536 80.5l2.5 3M536 80.5l3.5 0M531.5 79l5 -2M536.5 77l3.5 0M536.5 77l3.5 -2.5M519.5 82.5l-3.5 0M516 82.5l-1.5 -1M516 82.5l-1.5 0.5M519.5 82.5l-3.5 2M516 84.5l-2 0.5M516 84.5l-1 2M531.5 84l5.5 1.5M537 85.5l2.5 1.5M537 85.5l3.5 -1M531.5 84l5.5 -1.5M537 82.5l3 0.5M537 82.5l3 -2M517.5 86.5l-4 -1M513.5 85.5l-3 -1.5M513.5 85.5l-3.5 1M517.5 86.5l-4 2.5M513.5 89l-2.5 0M513.5 89l-1.5 3M532 87l4 3M536 90l2.5 2M536 90l3.5 0M532 87l5 -2M537 85l4.5 -0.5M537 85l3 -3M516.5 96l-5.5 0M511 96l-3.5 -1.5M511 96l-3.5 1M516.5 96l-5 3.5M511.5 99.5l-3 0.5M511.5 99.5l-2 2.5M533.5 95.5l4.5 4.5M538 100l2 4.5M538 100l3.5 2M533.5 95.5l5.5 0M539 95.5l3 2M539 95.5l4 -1M516.5 99.5l-6.5 -0.5M510 99l-3.5 -2M510 99l-4 0.5M516.5 99.5l-5.5 4.5M511 104l-3.5 1M511 104l-1.5 3M535 97.5l5.5 3M540.5 100.5l2.5 3M540.5 100.5l4 0M535 97.5l6.5 -1.5M541.5 96l5 -0.5M541.5 96l3.5 -3.5M515 98.5l-6 -2.5M509 96l-4.5 -3M509 96l-5 0M515 98.5l-6.5 2.5M508.5 101l-4.5 -0.5M508.5 101l-3.5 3.5M533 101.5l5.5 1.5M538.5 103l2.5 2M538.5 103l4 0.5M533 101.5l5.5 -2.5M538.5 99l5 0M538.5 99l3.5 -3M515 103.5l-5.5 -3M509.5 100.5l-2.5 -2.5M509.5 100.5l-4.5 0M515 103.5l-5.5 1.5M509.5 105l-4 -0.5M509.5 105l-3.5 2M536.5 106.5l6 4.5M542.5 111l2.5 3.5M542.5 111l4 1M536.5 106.5l8 -3M544.5 103.5l7 0M544.5 103.5l3.5 -3.5M515.5 110l-5.5 -3M510 107l-2.5 -3M510 107l-4 0.5M515.5 110l-6 3.5M509.5 113.5l-4 0M509.5 113.5l-2.5 2.5M535 112l5.5 5M540.5 117l2 4M540.5 117l4.5 1M535 112l7 0M542 112l4.5 2.5M542 112l4 -1M514 114l-6.5 -2M507.5 112l-3.5 -2M507.5 112l-5.5 0.5M514 114l-6.5 4M507.5 118l-5.5 0.5M507.5 118l-4 3.5M538.5 113.5l8 3M546.5 116.5l4 4M546.5 116.5l6.5 -0.5M538.5 113.5l8 -1.5M546.5 112l6 1.5M546.5 112l4.5 -3.5M514.5 117l-7.5 -2M507 115l-3 -3.5M507 115l-4.5 0M514.5 117l-7.5 2M507 119l-6 -1.5M507 119l-5 4M539 119l7 4M546 123l3 5M546 123l6 0.5M539 119l11 -0.5M550 118.5l6 2M550 118.5l7 -3.5M510.5 125l-9.5 -1M501 124l-5.5 -2.5M501 124l-6 2M510.5 125l-10.5 4M500 129l-7.5 -0.5M500 129l-4 5M534.5 125l5 3.5M539.5 128.5l3 3.5M539.5 128.5l5 1M534.5 125l7.5 0.5M542 125.5l4.5 2M542 125.5l5.5 -0.5M510 128.5l-11 -3M499 125.5l-6 -3.5M499 125.5l-7.5 1.5M510 128.5l-9.5 3.5M500.5 132l-7 -1M500.5 132l-7 4M536 129l7 5.5M543 134.5l4 5.5M543 134.5l5.5 2M536 129l9.5 0M545.5 129l5.5 2M545.5 129l7 -1.5M510.5 130.5l-10.5 -2.5M500 128l-6 -6M500 128l-6.5 0M510.5 130.5l-9.5 3.5M501 134l-6.5 -0.5M501 134l-6.5 5M536.5 131l8 4M544.5 135l3.5 4.5M544.5 135l7 1M536.5 131l7 -2.5M543.5 128.5l4.5 0.5M543.5 128.5l4.5 -3M507 135l-11 -4.5M496 130.5l-6.5 -6M496 130.5l-9 1.5M507 135l-9.5 2.5M497.5 137.5l-6.5 0M497.5 137.5l-5.5 4.5M540.5 136l9.5 4M550 140l4 6M550 140l8.5 0.5M540.5 136l9.5 -4M550 132l7 1M550 132l6.5 -5M508.5 143.5l-11 -2M497.5 141.5l-7.5 -3M497.5 141.5l-8 2.5M508.5 143.5l-7.5 6.5M501 150l-7 1.5M501 150l-3 7M537 142.5l6 7M543 149.5l1 5.5M543 149.5l6 3M537 142.5l10.5 -2M547.5 140.5l8.5 0M547.5 140.5l6.5 -3M507.5 148.5l-11.5 -3.5M496 145l-5 -5.5M496 145l-9.5 0M507.5 148.5l-8.5 5.5M499 154l-7 2M499 154l-4 6.5M537.5 146l9 5M546.5 151l3.5 5.5M546.5 151l7.5 1.5M537.5 146l7.5 0M545 146l4.5 2M545 146l4.5 -2M511 151.5l-9 -0.5M502 151l-5.5 -3.5M502 151l-6 2M511 151.5l-7.5 7M503.5 158.5l-6.5 1.5M503.5 158.5l-3.5 5.5M543.5 153l10 10.5M553.5 163.5l3 7.5M553.5 163.5l8 3M543.5 153l11 -2M554.5 151l7 0.5M554.5 151l7.5 -3.5"/></g>
<g filter="url(#tThin)"><ellipse cx="590" cy="100" rx="24" ry="46"/></g>
<g fill="none" stroke="#5f5548" stroke-linecap="round" opacity="0.8"><path stroke-width="2.0" d="M591 172l-0.5 -30"/><path stroke-width="1.5" d="M590.5 142l4 -20M590.5 142l-1.5 -19M590.5 142l-4.5 -19.5"/><path stroke-width="1.0" d="M594.5 122l9 -15.5M594.5 122l2 -14.5M594.5 122l-2.5 -15M589 123l4.5 -11.5M589 123l-5 -11.5M586 122.5l3 -14M586 122.5l-7.5 -12.5"/><path stroke-width="0.5" d="M603.5 106.5l11.5 -10M615 96.5l9.5 -2M624.5 94.5l6.5 1M631 95.5l4.5 3M631 95.5l5.5 -1.5M624.5 94.5l7.5 -4M632 90.5l6 -1.5M632 90.5l4.5 -4M615 96.5l5 -9M620 87.5l6.5 -6M626.5 81.5l7.5 -1.5M626.5 81.5l5 -5M626.5 81.5l2.5 -5M620 87.5l4 -7M624 80.5l5 -4.5M624 80.5l3.5 -6M624 80.5l1.5 -7.5M620 87.5l2 -7M622 80.5l2.5 -6M622 80.5l-1.5 -6M603.5 106.5l4 -15.5M607.5 91l8.5 -10.5M616 80.5l10.5 -6M626.5 74.5l8 -1M626.5 74.5l8.5 -6M626.5 74.5l7.5 -6.5M616 80.5l5.5 -6.5M621.5 74l6 -2.5M621.5 74l2 -7.5M616 80.5l4.5 -9M620.5 71.5l4.5 -4.5M620.5 71.5l4 -6M620.5 71.5l1.5 -8.5M607.5 91l-0.5 -13.5M607 77.5l2.5 -9.5M609.5 68l4 -4.5M609.5 68l1.5 -7M609.5 68l-0.5 -7M607 77.5l0.5 -12M607.5 65.5l4.5 -10M607.5 65.5l-1 -10.5M607.5 65.5l-2 -9M607 77.5l-4.5 -8.5M602.5 69l-2 -6.5M602.5 69l-5.5 -4.5M596.5 107.5l4 -8.5M600.5 99l5 -4.5M605.5 94.5l4.5 -3M610 91.5l4.5 0M610 91.5l4 -2M610 91.5l3.5 -2.5M605.5 94.5l3.5 -4M609 90.5l4 -1.5M609 90.5l2.5 -4M605.5 94.5l2.5 -5.5M608 89l4.5 -3M608 89l1 -4M600.5 99l3.5 -7M604 92l3 -4M607 88l3.5 -2.5M607 88l2.5 -3M607 88l2 -4.5M604 92l2 -7M606 85l4 -4.5M606 85l0 -6M604 92l0 -5.5M604 86.5l1.5 -3.5M604 86.5l-0.5 -3.5M604 86.5l-1.5 -3.5M600.5 99l0 -7M600.5 92l1.5 -5.5M602 86.5l1.5 -3.5M602 86.5l0 -4M600.5 92l0.5 -5M601 87l1 -4M601 87l0.5 -4M601 87l-1 -4M600.5 92l-2.5 -5.5M598 86.5l-0.5 -5.5M598 86.5l-3 -3.5M596.5 107.5l-2 -10.5M594.5 97l0.5 -8M595 89l3 -5.5M598 83.5l3.5 -3.5M598 83.5l1 -4.5M595 89l-1 -6M594 83l1 -5.5M594 83l-3 -3.5M594.5 97l-5 -6.5M589.5 90.5l-2.5 -5.5M587 85l0.5 -5.5M587 85l-1 -4M587 85l-2.5 -3M589.5 90.5l-4.5 -5M585 85.5l-1.5 -4.5M585 85.5l-2.5 -3.5M585 85.5l-3 -2M589.5 90.5l-5.5 -3.5M584 87l-2.5 -5M584 87l-4.5 -3M584 87l-4 -2M592 107l2 -11M594 96l4 -6.5M598 89.5l3.5 -3.5M601.5 86l3.5 -1.5M601.5 86l2.5 -2.5M601.5 86l1.5 -3M598 89.5l1.5 -4.5M599.5 85l1.5 -3M599.5 85l0 -4M594 96l-1 -6.5M593 89.5l0.5 -5.5M593.5 84l1 -3.5M593.5 84l-1 -3M593 89.5l-1.5 -5M591.5 84.5l1 -3.5M591.5 84.5l-0.5 -3M591.5 84.5l-1.5 -2.5M593 89.5l-2 -5M591 84.5l-0.5 -3.5M591 84.5l-1.5 -4M591 84.5l-3.5 -2.5M592 107l-3 -11.5M589 95.5l1 -8M590 87.5l3 -6.5M593 81l4.5 -4M593 81l0 -5.5M590 87.5l1 -6M591 81.5l2.5 -4M591 81.5l2 -5M591 81.5l-0.5 -4M590 87.5l-1.5 -6.5M588.5 81l0 -5M588.5 81l-1.5 -5M588.5 81l-4 -4M589 95.5l-1 -8M588 87.5l1 -7.5M589 80l2.5 -5M589 80l1 -6M589 80l-1.5 -6M588 87.5l-3 -6M585 81.5l-1 -5M585 81.5l-3 -3.5M589 95.5l-5.5 -8.5M583.5 87l-2.5 -6.5M581 80.5l0.5 -5.5M581 80.5l-3 -5.5M581 80.5l-3.5 -4.5M583.5 87l-5.5 -7M578 80l-1.5 -5.5M578 80l-4 -5M578 80l-6.5 -4M583.5 87l-6.5 -6M577 81l-3.5 -5.5M577 81l-4.5 -5.5M577 81l-7 -3M592 107l-5.5 -12M586.5 95l-1.5 -9M585 86l1 -6M586 80l2.5 -4M586 80l-1.5 -4.5M585 86l-1.5 -6.5M583.5 79.5l0.5 -4.5M583.5 79.5l-3.5 -4M585 86l-3.5 -5.5M581.5 80.5l-1 -5.5M581.5 80.5l-3 -4.5M581.5 80.5l-4 -3M586.5 95l-5.5 -9M581 86l-0.5 -6.5M580.5 79.5l1 -4M580.5 79.5l-1.5 -4M581 86l-5.5 -6M575.5 80l-2.5 -4.5M575.5 80l-5 -4.5M575.5 80l-6 -3.5M586.5 95l-6.5 -7.5M580 87.5l-2 -8M578 79.5l0.5 -8M578 79.5l-1 -6M578 79.5l-3.5 -5M580 87.5l-5.5 -4.5M574.5 83l-2.5 -4M574.5 83l-4 -4M574.5 83l-5 -1.5M580 87.5l-6.5 -3M573.5 84.5l-3.5 -3M573.5 84.5l-4 -2.5M573.5 84.5l-4.5 -0.5M593.5 111.5l6 -7.5M599.5 104l5.5 -2.5M605 101.5l4.5 -1M609.5 100.5l3 1M609.5 100.5l3 -0.5M609.5 100.5l3 -1.5M605 101.5l3.5 -2.5M608.5 99l2.5 -0.5M608.5 99l1.5 -2M599.5 104l5 -5.5M604.5 98.5l4 -1.5M608.5 97l4 -0.5M608.5 97l3.5 -3M604.5 98.5l3.5 -4.5M608 94l3.5 -2.5M608 94l2.5 -3M608 94l1 -4M604.5 98.5l2 -5M606.5 93.5l2.5 -3M606.5 93.5l0 -4.5M599.5 104l3 -6M602.5 98l4.5 -4M607 94l4.5 -2.5M607 94l3.5 -3M607 94l2.5 -5M602.5 98l-0.5 -6M602 92l2 -4M602 92l-2 -4M593.5 111.5l3.5 -8M597 103.5l5 -6M602 97.5l4.5 -2M606.5 95.5l4 -1M606.5 95.5l2.5 -3M602 97.5l2 -6.5M604 91l2 -3.5M604 91l-0.5 -5.5M597 103.5l2 -5.5M599 98l3 -4M602 94l3.5 -2M602 94l0.5 -4M599 98l1.5 -4M600.5 94l2 -2.5M600.5 94l0.5 -3.5M599 98l0 -5M599 93l1.5 -3M599 93l-0.5 -4.5M597 103.5l1 -6M598 97.5l2 -4.5M600 93l2.5 -3.5M600 93l1 -3.5M600 93l0.5 -3M598 97.5l-1.5 -4.5M596.5 93l0.5 -4.5M596.5 93l-1 -4.5M596.5 93l-2 -3.5M593.5 111.5l-0.5 -8.5M593 103l2 -5.5M595 97.5l2.5 -2.5M597.5 95l3 -1.5M597.5 95l1 -2.5M595 97.5l-0.5 -4.5M594.5 93l0.5 -3M594.5 93l0.5 -3.5M594.5 93l-1.5 -2.5M593 103l0 -5.5M593 97.5l0.5 -4M593.5 93.5l2 -3M593.5 93.5l0.5 -3M593.5 93.5l0 -2.5M593 97.5l-0.5 -4.5M592.5 93l1 -3M592.5 93l-1 -3M593 97.5l-2 -3M591 94.5l-0.5 -3M591 94.5l-1.5 -2.5M591 94.5l-2.5 -2M593 103l-2 -6.5M591 96.5l0.5 -6M591.5 90.5l2 -4M591.5 90.5l-1 -4.5M591 96.5l-3 -4.5M588 92l-1 -3.5M588 92l-3 -2.5M584 111.5l1 -10.5M585 101l3 -7M588 94l4.5 -4M592.5 90l3 -2M592.5 90l2 -4.5M588 94l1 -6.5M589 87.5l2 -4M589 87.5l0 -4M589 87.5l-2 -5M585 101l-0.5 -7M584.5 94l2 -4.5M586.5 89.5l2 -3M586.5 89.5l-0.5 -4M584.5 94l-1.5 -4.5M583 89.5l0 -3.5M583 89.5l-2 -4M583 89.5l-2.5 -3M585 101l-3 -9M582 92l-1 -8M581 84l1 -5M581 84l-0.5 -6M581 84l-2 -6M582 92l-1.5 -7M580.5 85l1.5 -6.5M580.5 85l-0.5 -5.5M580.5 85l-3.5 -5.5M582 92l-3 -5.5M579 86.5l-1 -4M579 86.5l-4 -3M584 111.5l-5.5 -5.5M578.5 106l-3.5 -6M575 100l-1.5 -5M573.5 95l0.5 -4.5M573.5 95l-2 -2.5M575 100l-2 -4M573 96l-0.5 -4M573 96l-2 -4M573 96l-3 -2.5M575 100l-4 -3.5M571 96.5l-2 -4M571 96.5l-4.5 -1M578.5 106l-6 -2M572.5 104l-4.5 -3M568 101l-2 -4M568 101l-3.5 -1.5M572.5 104l-4.5 0M568 104l-3 -1M568 104l-3.5 -0.5M568 104l-3 0.5M589 108.5l6 -10.5M595 98l6 -6.5M601 91.5l6 -4M607 87.5l5 -1.5M607 87.5l2.5 -4M601 91.5l4.5 -5.5M605.5 86l5 -2.5M605.5 86l3 -4.5M605.5 86l1 -4.5M601 91.5l3 -6M604 85.5l4 -4M604 85.5l2 -5.5M604 85.5l1 -5M595 98l5 -9M600 89l6 -6M606 83l6 -4M606 83l4 -4M606 83l2 -6.5M600 89l3.5 -8.5M603.5 80.5l5 -4.5M603.5 80.5l3 -7M603.5 80.5l0.5 -6.5M600 89l2 -9M602 80l3 -4.5M602 80l0 -5.5M595 98l2 -8M597 90l3 -4.5M600 85.5l3.5 -2M600 85.5l3.5 -3.5M600 85.5l1 -3M597 90l-0.5 -5M596.5 85l0 -4M596.5 85l-2.5 -4M589 108.5l-3 -12M586 96.5l1.5 -8.5M587.5 88l3.5 -6M591 82l4 -2.5M591 82l1.5 -4.5M587.5 88l1.5 -6.5M589 81.5l2.5 -3.5M589 81.5l-1 -4.5M587.5 88l-1.5 -6M586 82l0.5 -4.5M586 82l-2 -4.5M586 96.5l-5 -7M581 89.5l-3 -7.5M578 82l0 -5M578 82l-3 -4M581 89.5l-4.5 -5M576.5 84.5l-1.5 -4.5M576.5 84.5l-3.5 -5M576.5 84.5l-4 -2M581 89.5l-6 -3.5M575 86l-3.5 -4.5M575 86l-4.5 -3M575 86l-5.5 -1.5M578.5 110l-3.5 -11M575 99l1 -9.5M576 89.5l3.5 -6.5M579.5 83l3.5 -3.5M579.5 83l1 -4.5M576 89.5l1.5 -7M577.5 82.5l3.5 -5.5M577.5 82.5l-0.5 -5M576 89.5l-1 -7.5M575 82l1 -6.5M575 82l-2.5 -4.5M575 99l-2 -7.5M573 91.5l0.5 -5M573.5 86.5l2 -4M573.5 86.5l0 -3.5M573.5 86.5l-1 -4M573 91.5l-1 -5M572 86.5l0.5 -3.5M572 86.5l-0.5 -4M572 86.5l-2.5 -3.5M573 91.5l-3 -5M570 86.5l0 -5M570 86.5l-2.5 -2.5M575 99l-5 -6.5M570 92.5l-2 -7M568 85.5l-0.5 -5.5M568 85.5l-4 -4.5M570 92.5l-3.5 -4.5M566.5 88l-2 -4M566.5 88l-3 -2.5M566.5 88l-4 -1.5M570 92.5l-5.5 -4M564.5 88.5l-4.5 -4.5M564.5 88.5l-5 -0.5M578.5 110l-4.5 -8.5M574 101.5l-1 -7.5M573 94l1 -6.5M574 87.5l2 -4M574 87.5l-1.5 -4M573 94l-2.5 -5.5M570.5 88.5l0 -5M570.5 88.5l-3 -3.5M574 101.5l-2.5 -7.5M571.5 94l-0.5 -6M571 88l2.5 -5M571 88l-0.5 -4.5M571 88l-1.5 -5M571.5 94l-4 -3.5M567.5 90.5l-2 -2.5M567.5 90.5l-2.5 -2.5M567.5 90.5l-4.5 -2M574 101.5l-5.5 -4.5M568.5 97l-3 -4M565.5 93l-1.5 -3.5M565.5 93l-2.5 -2.5M565.5 93l-3 -1.5M568.5 97l-5 -2M563.5 95l-4 -2.5M563.5 95l-4 -2M563.5 95l-5 0M578.5 110l-10 -7.5M568.5 102.5l-5 -6.5M563.5 96l-1 -5M562.5 91l1 -4M562.5 91l-2 -3M563.5 96l-3 -4.5M560.5 91.5l-1 -4M560.5 91.5l-2.5 -4M560.5 91.5l-2.5 -3M563.5 96l-5 -3.5M558.5 92.5l-2.5 -4.5M558.5 92.5l-3.5 -3M558.5 92.5l-6 -1M568.5 102.5l-8 -4M560.5 98.5l-6 -4.5M554.5 94l-3.5 -4.5M554.5 94l-5.5 -1M560.5 98.5l-7 -3M553.5 95.5l-4.5 -4M553.5 95.5l-6.5 -1.5M560.5 98.5l-7 0.5M553.5 99l-5 -2.5M553.5 99l-4 2"/></g>
<path d="M600 200L600 122" stroke="#3b4a2c" stroke-width="4.5" opacity=".95"/>
<path d="M600 124L599.5 70" stroke="#5a5044" stroke-width="1" opacity=".7"/>
<g filter="url(#bl6)"><ellipse cx="692" cy="105" rx="50" ry="80" fill="#5a5350" opacity=".55"/><ellipse cx="692" cy="182" rx="55" ry="36" fill="#4a3e32" opacity=".72"/><ellipse cx="728" cy="120" rx="14" ry="80" fill="#54463a" opacity=".6"/></g>
<g filter="url(#tDense)"><ellipse cx="690" cy="105" rx="62" ry="90"/><ellipse cx="655" cy="170" rx="45" ry="40"/><ellipse cx="722" cy="150" rx="22" ry="60"/></g>
<g filter="url(#tBrown)"><ellipse cx="705" cy="120" rx="40" ry="85"/><ellipse cx="670" cy="180" rx="60" ry="25"/><ellipse cx="615" cy="160" rx="30" ry="40"/></g>
<g fill="none" stroke="#4b4236" stroke-linecap="round" opacity="0.95"><path stroke-width="7.0" d="M677 200l-1.5 -40"/><path stroke-width="5.0" d="M675.5 160l12 -32.5M675.5 160l-14.5 -29"/><path stroke-width="3.5" d="M687.5 127.5l18.5 -18.5M687.5 127.5l-0.5 -32M661 131l0 -26M661 131l-13 -16.5M661 131l-20.5 -12"/><path stroke-width="2.5" d="M706 109l19.5 -6.5M706 109l12.5 -13M706 109l8.5 -15M687 95.5l12.5 -22.5M687 95.5l-9 -26M661 105l10 -21M661 105l2 -20M661 105l-12 -19M648 114.5l-1 -15.5M648 114.5l-6.5 -12.5M648 114.5l-12.5 -6.5M640.5 119l-11.5 -11M640.5 119l-19.5 0.5"/><path stroke-width="1.5" d="M725.5 102.5l14.5 2.5M725.5 102.5l12 -9.5M718.5 96l13 -6.5M718.5 96l4 -12M714.5 94l12 -9.5M714.5 94l6.5 -11.5M714.5 94l1 -13.5M699.5 73l16.5 -15M699.5 73l9 -15.5M699.5 73l-0.5 -23.5M678 69.5l3 -21M678 69.5l-7.5 -22M678 69.5l-11 -18.5M671 84l13.5 -16M671 84l9.5 -17M671 84l3 -17M663 85l9 -14M663 85l-2.5 -17.5M649 86l-3.5 -15M649 86l-10 -10M649 86l-15.5 -11.5M647 99l6.5 -11M647 99l-1 -12M647 99l-3.5 -11M641.5 102l-1 -12M641.5 102l-7 -7M635.5 108l-8.5 -7.5M635.5 108l-12.5 0.5M629 108l-4 -13.5M629 108l-12.5 -2M621 119.5l-11.5 -3M621 119.5l-14.5 8"/><path stroke-width="1.0" d="M740 105l9.5 7M749.5 112l4 8M749.5 112l5.5 6M749.5 112l8 3.5M740 105l10.5 2M750.5 107l7.5 5M750.5 107l9 1.5M750.5 107l8 -3.5M740 105l12.5 -1M752.5 104l9 4.5M752.5 104l10 0.5M752.5 104l7.5 -3.5M737.5 93l10 -3M747.5 90l9.5 0M747.5 90l8 -3M747.5 90l6.5 -3.5M737.5 93l9 -7M746.5 86l8 -0.5M746.5 86l5 -5.5M746.5 86l3 -8M737.5 93l6 -10.5M743.5 82.5l9 -4.5M743.5 82.5l3.5 -8.5M743.5 82.5l3 -9M731.5 89.5l12 -1.5M743.5 88l9 4M743.5 88l10.5 -3M743.5 88l7 -4M731.5 89.5l9 -10M740.5 79.5l9 -5.5M740.5 79.5l6 -9M740.5 79.5l0.5 -9M722.5 84l7.5 -5.5M730 78.5l7.5 -3M730 78.5l6 -5.5M730 78.5l3.5 -5.5M722.5 84l4.5 -8.5M727 75.5l6.5 -4.5M727 75.5l4.5 -6M727 75.5l-0.5 -8M722.5 84l-0.5 -8M722 76l3.5 -5.5M722 76l-0.5 -6M722 76l-3.5 -4.5M726.5 84.5l10.5 -2M737 82.5l6 3M737 82.5l6.5 -4M726.5 84.5l9 -9.5M735.5 75l10 -3.5M735.5 75l5 -8.5M726.5 84.5l9 -11M735.5 73.5l10 -6M735.5 73.5l1.5 -11M721 82.5l7.5 -8.5M728.5 74l6.5 -4.5M728.5 74l4.5 -8M721 82.5l5 -7M726 75.5l6 -3.5M726 75.5l0.5 -8M721 82.5l0.5 -9.5M721.5 73l1.5 -6M721.5 73l0 -8.5M721.5 73l-3.5 -5.5M715.5 80.5l4.5 -7.5M720 73l5 -4M720 73l3 -6.5M720 73l1.5 -6M715.5 80.5l2.5 -11.5M718 69l6 -6M718 69l-0.5 -9.5M715.5 80.5l-4.5 -9M711 71.5l0 -7.5M711 71.5l-6 -4M716 58l14.5 -3M730.5 55l11.5 0.5M730.5 55l8 -9M716 58l6 -14.5M722 43.5l8 -10.5M722 43.5l3 -11M722 43.5l1.5 -12M708.5 57.5l11.5 -9.5M720 48l12.5 -1M720 48l4.5 -10.5M708.5 57.5l0.5 -14M709 43.5l4 -10.5M709 43.5l-1 -10M709 43.5l-3.5 -9M699 49.5l7 -18.5M706 31l10 -11.5M706 31l4 -16M706 31l1 -15M699 49.5l-1 -18.5M698 31l2.5 -13M698 31l-7 -11.5M699 49.5l-7.5 -16.5M691.5 33l0 -14M691.5 33l-12 -9M681 48.5l8.5 -14.5M689.5 34l10 -10M689.5 34l-1 -15M681 48.5l-4 -17.5M677 31l4 -13M677 31l-2 -13M677 31l-9 -10M670.5 47.5l6 -20M676.5 27.5l11 -16M676.5 27.5l1.5 -18.5M676.5 27.5l-4 -15.5M670.5 47.5l-12 -11M658.5 36.5l-6 -9.5M658.5 36.5l-7 -7.5M658.5 36.5l-10.5 -3.5M667 51l-2 -17.5M665 33.5l6 -11M665 33.5l-2 -14.5M665 33.5l-4.5 -10.5M667 51l-15 -8M652 43l-6.5 -13M652 43l-11 -1M684.5 68l12.5 -6.5M697 61.5l11.5 0.5M697 61.5l9.5 -4M697 61.5l6 -8.5M684.5 68l5 -14.5M689.5 53.5l7.5 -9.5M689.5 53.5l2 -12.5M689.5 53.5l-3.5 -13M680.5 67l13.5 -10M694 57l12.5 -2M694 57l11 -8M694 57l7 -13M680.5 67l2.5 -13M683 54l5.5 -8.5M683 54l-3.5 -10.5M674 67l8 -10M682 57l9 -2.5M682 57l0.5 -8.5M674 67l2.5 -14M676.5 53l8.5 -7.5M676.5 53l-4 -10.5M674 67l-4.5 -14.5M669.5 52.5l2.5 -10M669.5 52.5l-7 -10M672 71l12 -9M684 62l10 -0.5M684 62l7 -6.5M684 62l5.5 -8M672 71l1 -12.5M673 58.5l7 -8M673 58.5l-1 -8.5M660.5 67.5l4 -14M664.5 53.5l10 -9M664.5 53.5l4.5 -12M664.5 53.5l-2 -11.5M660.5 67.5l-7 -9.5M653.5 58l-2 -9.5M653.5 58l-6 -4M645.5 71l4 -11M649.5 60l7 -6M649.5 60l1.5 -9M649.5 60l-2.5 -8.5M645.5 71l-6.5 -11.5M639 59.5l-1 -8.5M639 59.5l-7.5 -5M639 76l-3 -10M636 66l1.5 -6.5M636 66l-3 -7.5M636 66l-6 -6.5M639 76l-11.5 -2.5M627.5 73.5l-7.5 -7M627.5 73.5l-10 4M633.5 74.5l-7 -12.5M626.5 62l0.5 -9M626.5 62l-6.5 -9.5M626.5 62l-9 -5M633.5 74.5l-14.5 -5.5M619 69l-12 -7.5M619 69l-12 -0.5M653.5 88l7.5 -6M661 82l7.5 -4M661 82l3.5 -5.5M653.5 88l1.5 -8M655 80l5 -6M655 80l-2.5 -6.5M646 87l2.5 -7M648.5 80l4.5 -3M648.5 80l2 -5.5M648.5 80l-1 -5M646 87l0 -9.5M646 77.5l4 -5M646 77.5l-4.5 -6.5M646 87l-3.5 -9.5M642.5 77.5l2.5 -9.5M642.5 77.5l-3.5 -7.5M642.5 77.5l-6.5 -5M643.5 88l1 -7.5M644.5 80.5l3.5 -5.5M644.5 80.5l0 -6M644.5 80.5l-2 -6M643.5 88l-6.5 -6M637 82l-3.5 -4.5M637 82l-5.5 -5M637 82l-6 -0.5M640.5 90l2.5 -8.5M643 81.5l4.5 -6.5M643 81.5l-1.5 -6M640.5 90l0.5 -9M641 81l2 -5.5M641 81l2 -7.5M641 81l-3.5 -6M640.5 90l-4.5 -9M636 81l1 -7M636 81l-7 -3.5M634.5 95l-1 -8.5M633.5 86.5l2 -6.5M633.5 86.5l-4 -4.5M634.5 95l-8.5 -3M626 92l-5.5 -3.5M626 92l-7 -2.5M626 92l-7 0.5M627 100.5l-5 -9M622 91.5l1 -6.5M622 91.5l-5 -4.5M627 100.5l-8 -3M619 97.5l-3.5 -5M619 97.5l-6.5 -1.5M619 97.5l-6.5 -1M623 108.5l-8 -2.5M615 106l-4.5 -5.5M615 106l-5.5 -3M615 106l-7.5 -0.5M623 108.5l-11 -0.5M612 108l-7.5 -2M612 108l-8 0M612 108l-7.5 2.5M623 108.5l-11 2.5M612 111l-8.5 -0.5M612 111l-7.5 1.5M612 111l-7 7.5M625 94.5l1 -9.5M626 85l5 -5M626 85l-3 -7.5M625 94.5l-8.5 -8.5M616.5 86l-3 -8M616.5 86l-6.5 -6M616.5 86l-8.5 -3M616.5 106l-10.5 -5M606 101l-5.5 -7.5M606 101l-9 1.5M616.5 106l-11.5 -2.5M605 103.5l-5.5 -6.5M605 103.5l-8 1M616.5 106l-9.5 4.5M607 110.5l-7 1M607 110.5l-5.5 5M609.5 116.5l-7.5 -6M602 110.5l-2 -7M602 110.5l-6.5 -5M602 110.5l-8 -2.5M609.5 116.5l-8.5 -0.5M601 116l-4.5 -3.5M601 116l-6 4M606.5 127.5l-11 -0.5M595.5 127l-7.5 -5.5M595.5 127l-9 2M606.5 127.5l-11 6M595.5 133.5l-8.5 2M595.5 133.5l-7.5 6M606.5 127.5l-8 7.5M598.5 135l-7 0.5M598.5 135l-3.5 7"/><path stroke-width="0.5" d="M753.5 120l-0.5 7M753.5 120l4.5 4.5M755 118l1 6M755 118l5 4.5M755 118l5 2M757.5 115.5l3.5 5.5M757.5 115.5l7.5 -0.5M758 112l4.5 6M758 112l7.5 1.5M759.5 108.5l7.5 3.5M759.5 108.5l7.5 -2M758.5 103.5l8 0.5M758.5 103.5l5.5 -4.5M761.5 108.5l3 6.5M761.5 108.5l8 3.5M761.5 108.5l7 -0.5M762.5 104.5l8 4M762.5 104.5l8 -1M760 100.5l6 -1M760 100.5l6 -2.5M760 100.5l3.5 -4.5M757 90l6 1.5M757 90l6 -4.5M755.5 87l5.5 1M755.5 87l6 -1M755.5 87l5 -5.5M754 86.5l5 0.5M754 86.5l3 -5M754.5 85.5l6.5 1M754.5 85.5l7 -1M754.5 85.5l5.5 -2M751.5 80.5l5.5 -4M751.5 80.5l1 -6.5M749.5 78l4.5 -6.5M749.5 78l-1 -6M752.5 78l6.5 -1M752.5 78l6.5 -2.5M752.5 78l7 -5.5M747 74l5 -4M747 74l3.5 -6.5M747 74l0 -6M746.5 73.5l3 -5M746.5 73.5l-2.5 -7.5M752.5 92l4.5 5M752.5 92l8 3.5M752.5 92l8 0M754 85l7 1M754 85l8.5 -3M754 85l6 -6.5M750.5 84l7 -1M750.5 84l6 -3.5M750.5 84l3.5 -6M749.5 74l8.5 0.5M749.5 74l6 -3M749.5 74l3.5 -7.5M746.5 70.5l7.5 -5M746.5 70.5l0.5 -8.5M741 70.5l3.5 -5M741 70.5l1.5 -8M741 70.5l-1.5 -7M737.5 75.5l6.5 -1M737.5 75.5l4.5 -3.5M736 73l5 -2.5M736 73l2.5 -5.5M733.5 73l5 -2M733.5 73l2.5 -5.5M733.5 73l1.5 -4.5M733.5 71l7 -2.5M733.5 71l4.5 -5.5M731.5 69.5l5.5 -3M731.5 69.5l1 -5.5M726.5 67.5l4 -5.5M726.5 67.5l-3.5 -5M725.5 70.5l3.5 -2.5M725.5 70.5l2 -5M725.5 70.5l1 -5.5M721.5 70l1 -5.5M721.5 70l0 -4.5M721.5 70l-2 -4M718.5 71.5l-1.5 -4.5M718.5 71.5l-3 -1.5M743 85.5l3.5 3.5M743 85.5l5.5 2M743 85.5l4.5 0M743.5 78.5l7 -1.5M743.5 78.5l6.5 -2.5M743.5 78.5l4.5 -5M745.5 71.5l9 -0.5M745.5 71.5l6 -2M745.5 71.5l7 -5.5M740.5 66.5l7.5 -3.5M740.5 66.5l-0.5 -8.5M745.5 67.5l8 -0.5M745.5 67.5l5 -5.5M737 62.5l5 -6M737 62.5l-3 -6M735 69.5l7 -0.5M735 69.5l4.5 -3.5M735 69.5l2 -5.5M733 66l5 -5M733 66l2 -6.5M733 66l0 -8.5M732 72l5.5 -0.5M732 72l4 -1.5M732 72l3 -3M726.5 67.5l2.5 -6M726.5 67.5l-2 -6M723 67l3 -5M723 67l2 -4.5M723 67l0.5 -5.5M721.5 64.5l4 -6M721.5 64.5l-1 -6M721.5 64.5l-1.5 -7M718 67.5l-2 -6M718 67.5l-5 -3M725 69l4.5 -1.5M725 69l2.5 -3.5M723 66.5l3.5 -5M723 66.5l1.5 -5M723 66.5l-0.5 -6M721.5 67l3.5 -4M721.5 67l-0.5 -4M724 63l7 -4M724 63l2 -6M717.5 59.5l1.5 -7M717.5 59.5l-0.5 -6.5M717.5 59.5l-3 -5.5M711 64l2.5 -6M711 64l-2.5 -4.5M705 67.5l-2.5 -6M705 67.5l-6.5 -1M742 55.5l9 5M742 55.5l8.5 -5M738.5 46l8.5 -4M738.5 46l3.5 -8M730 33l8 -5M730 33l3.5 -8M725 32.5l5 -7.5M725 32.5l-1.5 -8M723.5 31.5l3 -8M723.5 31.5l-3 -8.5M732.5 47l7.5 3M732.5 47l8 -5M724.5 37.5l7 -5.5M724.5 37.5l-1 -8M713 33l7 -5.5M713 33l0 -10M708 33.5l1 -7.5M708 33.5l-5 -6M705.5 34.5l1 -8M705.5 34.5l-5.5 -4M716 19.5l10 -7M716 19.5l5.5 -11M710 15l8 -9.5M710 15l6 -13.5M710 15l0 -13.5M707 16l8.5 -10.5M707 16l4 -13.5M707 16l-5.5 -10.5M700.5 18l4 -8.5M700.5 18l1.5 -10.5M700.5 18l-3 -11.5M691 19.5l-0.5 -10.5M691 19.5l-6.5 -10M691 19.5l-7.5 -6.5M691.5 19l5 -10M691.5 19l-0.5 -12.5M691.5 19l-3 -10.5M679.5 24l-5.5 -12M679.5 24l-10 -8M679.5 24l-13 -4.5M699.5 24l9 -3M699.5 24l4 -12M688.5 19l2 -10.5M688.5 19l-6 -13M681 18l7.5 -9.5M681 18l-2 -9.5M675 18l3 -10M675 18l-4.5 -8.5M668 21l-3.5 -8.5M668 21l-8.5 -4.5M687.5 11.5l13.5 -6M687.5 11.5l10.5 -11.5M687.5 11.5l4.5 -15.5M678 9l9 -11.5M678 9l-2.5 -13M672.5 12l3 -14M672.5 12l-7 -9M652.5 27l-2 -7.5M652.5 27l-7 -6.5M651.5 29l-2.5 -8.5M651.5 29l-6.5 -5M651.5 29l-8 -2.5M648 33l-6 -5M648 33l-7.5 -3M648 33l-9 0M671 22.5l7.5 -6.5M671 22.5l5 -8M671 22.5l0.5 -10M663 19l0.5 -11.5M663 19l-2.5 -10M663 19l-6 -8M660.5 23l1.5 -9.5M660.5 23l-7 -7.5M645.5 30l0 -9.5M645.5 30l-9.5 -8M641 42l-6.5 -4M641 42l-7 1M708.5 62l7.5 3M708.5 62l8 1M708.5 62l9 -4.5M706.5 57.5l8 1.5M706.5 57.5l5.5 -4M706.5 57.5l6 -7M703 53l7 -4M703 53l5.5 -5.5M703 53l3 -9M697 44l10.5 -3.5M697 44l4 -9M691.5 41l6.5 -6.5M691.5 41l-4 -9.5M686 40.5l0.5 -12M686 40.5l-6.5 -7M706.5 55l11 2M706.5 55l8 -4.5M705 49l8.5 -2.5M705 49l7 -7.5M705 49l7 -9M701 44l9.5 -6M701 44l5 -9.5M701 44l0.5 -10M688.5 45.5l5 -4.5M688.5 45.5l4.5 -6M688.5 45.5l0.5 -9.5M679.5 43.5l-0.5 -9M679.5 43.5l-5 -7.5M691 54.5l8 1.5M691 54.5l5 -4M682.5 48.5l3.5 -7M682.5 48.5l-3.5 -7M685 45.5l6.5 -2.5M685 45.5l4.5 -5.5M685 45.5l3.5 -7.5M672.5 42.5l-1 -8M672.5 42.5l-5.5 -5M672 42.5l5 -6M672 42.5l2 -9M672 42.5l-2.5 -6.5M662.5 42.5l-3.5 -9.5M662.5 42.5l-7 -7M662.5 42.5l-8 -4M694 61.5l6.5 3.5M694 61.5l8.5 -0.5M694 61.5l6.5 -3M691 55.5l6 -3M691 55.5l3.5 -7M689.5 54l6 -5M689.5 54l4.5 -7M689.5 54l2 -6.5M680 50.5l6.5 -3M680 50.5l4.5 -6.5M680 50.5l2.5 -7M672 50l2.5 -6.5M672 50l-3 -7M674.5 44.5l8.5 -3.5M674.5 44.5l7.5 -6.5M674.5 44.5l3.5 -8M669 41.5l6.5 -9.5M669 41.5l-1.5 -9M662.5 42l3 -9.5M662.5 42l-1.5 -10M662.5 42l-4.5 -9.5M651.5 48.5l0.5 -6.5M651.5 48.5l-5.5 -6M647.5 54l-3 -6.5M647.5 54l-7 -1.5M656.5 54l6.5 -1M656.5 54l6.5 -3.5M656.5 54l2.5 -6M651 51l4 -4.5M651 51l1 -8M651 51l-3 -7.5M647 51.5l0.5 -7M647 51.5l-3.5 -6M638 51l1.5 -7M638 51l-1 -6.5M638 51l-3 -6.5M631.5 54.5l-4.5 -5M631.5 54.5l-5.5 -2.5M631.5 54.5l-7 -2M637.5 59.5l2.5 -5.5M637.5 59.5l-1 -4.5M633 58.5l0 -7.5M633 58.5l-2.5 -6M633 58.5l-5.5 -4.5M630 59.5l-2.5 -7M630 59.5l-6.5 -5M630 59.5l-6.5 -3.5M620 66.5l-4.5 -7M620 66.5l-7 -4.5M620 66.5l-5.5 -2.5M617.5 77.5l-7 0.5M617.5 77.5l-6 5.5M627 53l3 -6.5M627 53l-1 -6.5M620 52.5l-0.5 -9M620 52.5l-4.5 -6.5M620 52.5l-7 -4.5M617.5 57l-5.5 -5.5M617.5 57l-8.5 -3M617.5 57l-7.5 0.5M607 61.5l-7 -8.5M607 61.5l-10 -4.5M607 61.5l-12.5 -2.5M607 68.5l-6.5 -3.5M607 68.5l-8.5 1.5M607 68.5l-8 4.5M668.5 78l7.5 0.5M668.5 78l6.5 -3.5M668.5 78l4 -6M664.5 76.5l4 -2.5M664.5 76.5l0 -5.5M660 74l5.5 -1.5M660 74l2 -4.5M652.5 73.5l1 -5M652.5 73.5l-2 -4M652.5 73.5l-3.5 -3M653 77l4 -1M653 77l2.5 -4M650.5 74.5l3.5 -3M650.5 74.5l0 -4M647.5 75l0 -4.5M647.5 75l-0.5 -4.5M647.5 75l-3 -4M650 72.5l4 -2.5M650 72.5l2 -5.5M641.5 71l-1 -6M641.5 71l-2.5 -5M641.5 71l-5 -4.5M645 68l4.5 -5.5M645 68l-0.5 -8M639 70l-0.5 -6M639 70l-5 -5M636 72.5l-2.5 -6.5M636 72.5l-5 -3M636 72.5l-5.5 -1M648 75l4.5 -3.5M648 75l0.5 -5.5M644.5 74.5l2 -5M644.5 74.5l0.5 -4.5M644.5 74.5l-2 -4M642.5 74.5l0.5 -4M642.5 74.5l-3.5 -3M633.5 77.5l-1 -4.5M633.5 77.5l-2.5 -3.5M633.5 77.5l-5 -1.5M631.5 77l-3.5 -5.5M631.5 77l-3 -4M631.5 77l-6 -2.5M631 81.5l-4 -1.5M631 81.5l-5.5 -1.5M631 81.5l-4.5 1.5M647.5 75l4.5 -3.5M647.5 75l1.5 -6M641.5 75.5l1.5 -5M641.5 75.5l-3 -3.5M643 75.5l2.5 -4M643 75.5l0 -5.5M643 73.5l5.5 -4.5M643 73.5l2 -6M643 73.5l-1.5 -7M637.5 75l1 -5M637.5 75l-2 -5.5M637.5 75l-3.5 -3M637 74l3 -4.5M637 74l1.5 -4M637 74l-2 -5M629 77.5l-3 -6M629 77.5l-6.5 -2.5M629 77.5l-6 -1.5M635.5 80l3.5 -4M635.5 80l0 -6M629.5 82l-0.5 -4.5M629.5 82l-2 -4M629.5 82l-4 -2.5M620.5 88.5l-3 -4.5M620.5 88.5l-4.5 -1.5M619 89.5l-4 -3.5M619 89.5l-6 -3M619 89.5l-6 1.5M619 92.5l-5 -3M619 92.5l-5 1.5M623 85l2 -5.5M623 85l-0.5 -4.5M623 85l-1 -5M617 87l-2 -3.5M617 87l-4 -3M617 87l-5 -2M615.5 92.5l-1.5 -4.5M615.5 92.5l-4.5 -3M612.5 96l-4.5 -3M612.5 96l-5 0.5M612.5 96.5l-3.5 -2.5M612.5 96.5l-6 1M610.5 100.5l-2 -5M610.5 100.5l-5 -3.5M610.5 100.5l-6 -2.5M609.5 103l-3.5 -3.5M609.5 103l-4.5 -2M609.5 103l-5 -0.5M607.5 105.5l-5.5 -2M607.5 105.5l-6 0.5M607.5 105.5l-6 2M604.5 106l-5 -3M604.5 106l-5.5 2M604 108l-6.5 -2M604 108l-6.5 -0.5M604 108l-5 3M604.5 110.5l-7.5 0M604.5 110.5l-6.5 1M604.5 110.5l-4 4M603.5 110.5l-7 -2.5M603.5 110.5l-6 -1.5M603.5 110.5l-6.5 2M604.5 112.5l-5.5 -2M604.5 112.5l-6 0.5M604.5 112.5l-5.5 4.5M605 118.5l-7 4M605 118.5l-6 4.5M605 118.5l-2 6.5M631 80l5 -1.5M631 80l4 -4M631 80l1 -5.5M623 77.5l0 -6M623 77.5l-4.5 -3.5M613.5 78l0.5 -5.5M613.5 78l-5 -5M610 80l-3.5 -6.5M610 80l-7 -4.5M610 80l-7 -4M608 83l-6.5 -5M608 83l-6.5 -1M608 83l-8.5 0.5M600.5 93.5l-2.5 -8.5M600.5 93.5l-3 -6M600.5 93.5l-5.5 -4.5M597 102.5l-6 -0.5M597 102.5l-5 4.5M599.5 97l-3.5 -6M599.5 97l-5.5 -5M599.5 97l-6 -4M597 104.5l-7.5 -0.5M597 104.5l-6.5 0.5M597 104.5l-5 4.5M600 111.5l-5 -2.5M600 111.5l-4.5 2M601.5 115.5l-6 1M601.5 115.5l-4.5 2.5M601.5 115.5l-3.5 5.5M600 103.5l0 -7M600 103.5l-2.5 -6M600 103.5l-4 -4M595.5 105.5l-1.5 -6.5M595.5 105.5l-7 -1M594 108l-6 -4M594 108l-6 2M596.5 112.5l-2 -4.5M596.5 112.5l-4 -3.5M596.5 112.5l-5 -1.5M595 120l-6 2M595 120l-5.5 3M595 120l-2.5 5M588 121.5l-2.5 -6M588 121.5l-7 -4M588 121.5l-8.5 -3M586.5 129l-7.5 -2.5M586.5 129l-6.5 5.5M587 135.5l-5.5 -0.5M587 135.5l-6 3.5M588 139.5l-6.5 3.5M588 139.5l-6 5.5M588 139.5l-3.5 6.5M591.5 135.5l-5 -2.5M591.5 135.5l-5 0M591.5 135.5l-4.5 3.5M595 142l-6 3.5M595 142l0 6"/></g>
<g fill="none" stroke="#564c3e" stroke-linecap="round" opacity="0.9"><path stroke-width="4.0" d="M715 200l-4 -45"/><path stroke-width="3.0" d="M733 200l-7 -39.5"/><path stroke-width="2.5" d="M711 155l8.5 -32.5M711 155l1.5 -32.5M711 155l-12 -36M640 200l2.5 -30"/><path stroke-width="2.0" d="M719.5 122.5l14.5 -24.5M719.5 122.5l11 -24.5M719.5 122.5l-2 -24.5M712.5 122.5l14.5 -21.5M712.5 122.5l3 -22.5M712.5 122.5l-15 -24.5M699 119l8.5 -32M699 119l-19.5 -27.5M726 160.5l8 -24M726 160.5l-24 -27"/><path stroke-width="1.5" d="M734 98l15 -10M734 98l5 -24M730.5 98l13.5 -11M730.5 98l4 -17.5M730.5 98l-2.5 -21.5M717.5 98l10 -20M717.5 98l-7.5 -18M727 101l14.5 -10.5M727 101l12.5 -15.5M727 101l-0.5 -23M715.5 100l8 -16M715.5 100l-1 -17M715.5 100l-7 -17M697.5 98l1.5 -25.5M697.5 98l-22 -13.5M707.5 87l19 -15M707.5 87l-1.5 -25.5M679.5 91.5l-11.5 -27M679.5 91.5l-16.5 -19.5M679.5 91.5l-26.5 -15M734 136.5l12.5 -18.5M734 136.5l10 -17.5M734 136.5l-1.5 -18.5M702 133.5l-12 -31M702 133.5l-21.5 -18.5M702 133.5l-29 -6.5M642.5 170l8.5 -24.5M642.5 170l-11 -19"/><path stroke-width="1.0" d="M749 88l12.5 -5M749 88l7.5 -11.5M739 74l13 -14.5M739 74l-2 -17M744 87l11 -5M744 87l12.5 -10.5M744 87l7.5 -10M734.5 80.5l8 -9.5M734.5 80.5l-4.5 -13M728 76.5l6.5 -15.5M728 76.5l-2.5 -16M728 76.5l-8.5 -12.5M727.5 78l12.5 -10.5M727.5 78l-0.5 -16M710 80l-2.5 -15M710 80l-11 -13M741.5 90.5l14.5 -1.5M741.5 90.5l8.5 -13M739.5 85.5l13 -4.5M739.5 85.5l7.5 -11M739.5 85.5l1 -15M726.5 78l11 -17.5M726.5 78l-10.5 -17.5M723.5 84l11.5 -9.5M723.5 84l4 -14.5M723.5 84l-2 -14.5M714.5 83l2.5 -13M714.5 83l-7.5 -10M708.5 83l1 -14.5M708.5 83l-4 -12.5M708.5 83l-14 -8M699 72.5l10.5 -17.5M699 72.5l-6.5 -15.5M675.5 84.5l-15 -18.5M675.5 84.5l-20.5 0.5M726.5 72l16 -4.5M726.5 72l11.5 -10.5M726.5 72l12 -18.5M706 61.5l8.5 -15M706 61.5l2 -18M706 61.5l-7.5 -20M668 64.5l-3.5 -26.5M668 64.5l-14.5 -21M663 72l-4.5 -17M663 72l-16.5 -13.5M663 72l-15.5 -7.5M653 76.5l-11 -19M653 76.5l-20 -10M653 76.5l-19.5 -3M746.5 118l16 -10M746.5 118l4 -13.5M744 119l12.5 -11M744 119l-0.5 -17M732.5 118l4.5 -14.5M732.5 118l-7 -10.5M690 102.5l1.5 -23.5M690 102.5l-15 -21.5M680.5 115l-5 -18M680.5 115l-20 -5.5M673 127l-17 -14M673 127l-26.5 -0.5M673 127l-23.5 1.5M651 145.5l12 -18M663 127.5l13 -6M663 127.5l3 -18M651 145.5l-3.5 -20M647.5 125.5l6.5 -17M647.5 125.5l-8 -14.5M631.5 151l-1.5 -17M630 134l2.5 -13M630 134l-4.5 -11.5M631.5 151l-15.5 -7M616 144l-8 -8.5M616 144l-15.5 -1.5"/><path stroke-width="0.5" d="M761.5 83l11.5 -1.5M773 81.5l7.5 3.5M773 81.5l8.5 -2M773 81.5l7 -6.5M761.5 83l10.5 -5.5M772 77.5l9.5 -0.5M772 77.5l4 -7.5M761.5 83l7 -6M768.5 77l7 -1.5M768.5 77l4.5 -5.5M768.5 77l4 -6M756.5 76.5l9 -5.5M765.5 71l8 -0.5M765.5 71l7.5 -3M765.5 71l4.5 -7.5M756.5 76.5l5 -11.5M761.5 65l6 -5.5M761.5 65l5 -6.5M761.5 65l-0.5 -10.5M756.5 76.5l3.5 -11.5M760 65l5.5 -5.5M760 65l2 -8M760 65l-0.5 -9.5M752 59.5l13.5 -7.5M765.5 52l12.5 1.5M765.5 52l11 -6.5M765.5 52l8 -11.5M752 59.5l5 -13.5M757 46l7.5 -10.5M757 46l-1 -11.5M737 57l4.5 -11.5M741.5 45.5l6 -9M741.5 45.5l-0.5 -10M737 57l-1 -15M736 42l2.5 -13M736 42l-6 -11M737 57l-5.5 -11.5M731.5 45.5l-2 -11.5M731.5 45.5l-4 -9M731.5 45.5l-8.5 -6.5M755 82l10.5 0M765.5 82l8.5 3M765.5 82l7.5 -3M755 82l7.5 -3.5M762.5 78.5l5.5 -1.5M762.5 78.5l3 -5.5M755 82l8 -6M763 76l6 -1M763 76l4.5 -5M763 76l1.5 -6.5M756.5 76.5l13 -4.5M769.5 72l10 1.5M769.5 72l8.5 -3M769.5 72l7.5 -5M756.5 76.5l8.5 -9M765 67.5l8.5 -6M765 67.5l7.5 -6.5M765 67.5l2.5 -10.5M756.5 76.5l7 -10M763.5 66.5l7 -3.5M763.5 66.5l4.5 -7.5M763.5 66.5l1 -9.5M751.5 77l7.5 -6.5M759 70.5l6.5 -3M759 70.5l3 -6M751.5 77l2.5 -8.5M754 68.5l4 -4M754 68.5l0.5 -5.5M754 68.5l-0.5 -6M742.5 71l10 -4.5M752.5 66.5l9 1M752.5 66.5l9 -4.5M752.5 66.5l8 -6.5M742.5 71l4 -8M746.5 63l5 -6M746.5 63l4 -5.5M746.5 63l-0.5 -6.5M730 67.5l2 -10M732 57.5l4.5 -7.5M732 57.5l-2.5 -8.5M730 67.5l-4 -11M726 56.5l1.5 -9M726 56.5l-5.5 -9M730 67.5l-7 -8.5M723 59l-2 -8M723 59l-5.5 -6.5M723 59l-7.5 -4M734.5 61l7 -10M741.5 51l9 -6.5M741.5 51l2.5 -8M734.5 61l4 -10M738.5 51l6 -6M738.5 51l0.5 -8.5M734.5 61l1.5 -12.5M736 48.5l6 -7M736 48.5l-4 -7M725.5 60.5l5 -12M730.5 48.5l5.5 -7.5M730.5 48.5l2 -10.5M730.5 48.5l-1.5 -10M725.5 60.5l-5.5 -11.5M720 49l-1 -9M720 49l-10 -6.5M719.5 64l-3 -9.5M716.5 54.5l-0.5 -9M716.5 54.5l-4.5 -5.5M719.5 64l-9.5 -5M710 59l-6 -6.5M710 59l-8.5 -4M710 59l-8.5 0.5M740 67.5l13 -4M753 63.5l12.5 2M753 63.5l9.5 -4.5M753 63.5l7 -6M740 67.5l9.5 -9.5M749.5 58l9.5 -3.5M749.5 58l7 -7M749.5 58l5.5 -9M740 67.5l7.5 -10.5M747.5 57l8.5 -5M747.5 57l1 -11M727 62l6 -13M733 49l10.5 -7M733 49l2 -10M727 62l-7.5 -11.5M719.5 50.5l-1 -10.5M719.5 50.5l-11 -5.5M707.5 65l5.5 -11.5M713 53.5l8 -6.5M713 53.5l5 -8M713 53.5l2.5 -10M707.5 65l-3.5 -12.5M704 52.5l0.5 -9M704 52.5l-7 -6.5M707.5 65l-9 -10.5M698.5 54.5l-5 -10.5M698.5 54.5l-11 -5M699 67l-3.5 -10.5M695.5 56.5l-0.5 -9.5M695.5 56.5l-2 -7M695.5 56.5l-4.5 -7.5M699 67l-8 -9M691 58l-3.5 -8.5M691 58l-7 -4.5M699 67l-11 -4M688 63l-6.5 -5M688 63l-9 -2M688 63l-9 1M756 89l9 3.5M765 92.5l4 5.5M765 92.5l7.5 0M756 89l9 -4M765 85l8 -1M765 85l7 -3M765 85l6 -5.5M750 77.5l9 -5.5M759 72l8.5 -1.5M759 72l5 -9M750 77.5l8.5 -9M758.5 68.5l10.5 -2.5M758.5 68.5l6.5 -6M758.5 68.5l2.5 -9M750 77.5l3.5 -9.5M753.5 68l7 -5.5M753.5 68l0 -8M752.5 81l12.5 2M765 83l7 5M765 83l8.5 0.5M765 83l11 -2.5M752.5 81l12 -5M764.5 76l11 0.5M764.5 76l10.5 -2M764.5 76l5.5 -8M752.5 81l7.5 -9M760 72l8 -4.5M760 72l4 -8M747 74.5l10 -4.5M757 70l8.5 -1.5M757 70l9 -3.5M757 70l5.5 -6.5M747 74.5l6.5 -8M753.5 66.5l7.5 -4M753.5 66.5l2 -8.5M747 74.5l2.5 -9M749.5 65.5l4.5 -6.5M749.5 65.5l-2 -7M740.5 70.5l5.5 -11M746 59.5l7.5 -4.5M746 59.5l6 -7M746 59.5l-0.5 -9M740.5 70.5l-2 -11.5M738.5 59l1 -8.5M738.5 59l-0.5 -8.5M738.5 59l-7 -7.5M737.5 60.5l13 -12M750.5 48.5l13 -6M750.5 48.5l7 -10.5M737.5 60.5l2.5 -17.5M740 43l9 -9M740 43l-2.5 -14.5M716 60.5l-0.5 -19M715.5 41.5l5 -16M715.5 41.5l-0.5 -13M715.5 41.5l-7.5 -15M716 60.5l-15.5 -9M700.5 51.5l-11 -10.5M700.5 51.5l-16 -2M735 74.5l12.5 -3.5M747.5 71l11 0.5M747.5 71l11.5 -4.5M747.5 71l8 -6M735 74.5l4 -12.5M739 62l6.5 -7.5M739 62l0.5 -11.5M727.5 69.5l8.5 -7M736 62.5l6.5 -2M736 62.5l7 -5M736 62.5l3.5 -6.5M727.5 69.5l0.5 -12.5M728 57l5 -8M728 57l1 -9.5M728 57l-2.5 -10M721.5 69.5l3.5 -11M725 58.5l5 -5.5M725 58.5l-1.5 -9.5M721.5 69.5l-5.5 -7.5M716 62l-1 -7M716 62l-5 -3.5M717 70l3.5 -8M720.5 62l5 -3M720.5 62l0.5 -5.5M717 70l-3.5 -9M713.5 61l1.5 -6.5M713.5 61l-3.5 -7M713.5 61l-7 -5.5M707 73l-2 -9.5M705 63.5l1 -9M705 63.5l-6.5 -6M707 73l-7 -7.5M700 65.5l-2 -7.5M700 65.5l-8 -2M707 73l-8 -7M699 66l-2.5 -8.5M699 66l-7 -2M709.5 68.5l3.5 -9M713 59.5l6 -4.5M713 59.5l2 -7M713 59.5l0.5 -7M709.5 68.5l0 -10M709.5 58.5l4.5 -6.5M709.5 58.5l0.5 -8M709.5 58.5l-3 -6.5M709.5 68.5l-4 -11.5M705.5 57l1.5 -8M705.5 57l-8 -6.5M704.5 70.5l1.5 -10.5M706 60l3.5 -8.5M706 60l-2 -7.5M704.5 70.5l-6 -10M698.5 60.5l1 -10.5M698.5 60.5l-3.5 -6.5M698.5 60.5l-7 -6.5M704.5 70.5l-7 -9.5M697.5 61l-3.5 -9M697.5 61l-7 -6M694.5 75l-7 -8M687.5 67l-2 -6.5M687.5 67l-4.5 -8M687.5 67l-7 -2M694.5 75l-14 0.5M680.5 75.5l-11 -6M680.5 75.5l-8.5 5.5M709.5 55l12.5 -9M722 46l12 -3M722 46l8.5 -11M709.5 55l1 -15.5M710.5 39.5l6 -13M710.5 39.5l-1.5 -13.5M710.5 39.5l-5.5 -11M692.5 57l0.5 -15M693 42l4 -9M693 42l1 -10M693 42l-3.5 -12.5M692.5 57l-2 -13.5M690.5 43.5l1 -10M690.5 43.5l-1.5 -12.5M690.5 43.5l-6.5 -8M692.5 57l-7.5 -10M685 47l-2 -10M685 47l-8.5 -6.5M660.5 66l-9 -19.5M651.5 46.5l-1 -15.5M651.5 46.5l-13.5 -15M660.5 66l-13 -15M647.5 51l-3 -13.5M647.5 51l-11 -7.5M660.5 66l-16 -8.5M644.5 57.5l-9 -8.5M644.5 57.5l-12 -2.5M655 85l-16 -8.5M639 76.5l-8 -10.5M639 76.5l-12.5 0M655 85l-14 3.5M641 88.5l-10 -3M641 88.5l-10.5 6.5M655 85l-13.5 5.5M641.5 90.5l-11 -1.5M641.5 90.5l-7 7.5M742.5 67.5l12.5 1.5M755 69l9.5 3M755 69l7.5 2M755 69l10 -2M742.5 67.5l7 -8M749.5 59.5l10 -2.5M749.5 59.5l6 -6M749.5 59.5l1.5 -9M738 61.5l14 -3.5M752 58l12 1M752 58l11.5 -5.5M752 58l8 -7.5M738 61.5l8.5 -12M746.5 49.5l10.5 -7.5M746.5 49.5l3 -10M738.5 53.5l14.5 -6M753 47.5l14 2M753 47.5l7.5 -12M738.5 53.5l5.5 -17.5M744 36l9 -8M744 36l0.5 -12M714.5 46.5l10 -6.5M724.5 40l7.5 -2.5M724.5 40l7 -3.5M724.5 40l4 -7.5M714.5 46.5l0 -12M714.5 34.5l5 -8M714.5 34.5l0 -11M714.5 34.5l-2.5 -10M708 43.5l10 -11.5M718 32l12.5 -4M718 32l8.5 -11.5M718 32l3.5 -11M708 43.5l-6 -11M702 32.5l0.5 -9.5M702 32.5l-9 -6M698.5 41.5l1.5 -17M700 24.5l5.5 -11.5M700 24.5l2 -11.5M700 24.5l-4.5 -11.5M698.5 41.5l-11 -8.5M687.5 33l-5 -11M687.5 33l-10.5 -1.5M664.5 38l7 -22.5M671.5 15.5l17 -14M671.5 15.5l-1.5 -18.5M664.5 38l0.5 -18.5M665 19.5l5.5 -11M665 19.5l-7.5 -14.5M664.5 38l-9.5 -15M655 23l-1.5 -14M655 23l-12 -11.5M653.5 43.5l-2 -18.5M651.5 25l5.5 -15M651.5 25l-2 -16M651.5 25l-4.5 -13M653.5 43.5l-15.5 -11.5M638 32l-9.5 -11.5M638 32l-14 -7M638 32l-15 -2M658.5 55l3 -13M661.5 42l6 -8.5M661.5 42l-2 -8.5M658.5 55l-1.5 -13M657 42l4 -9M657 42l-4 -9M658.5 55l-6.5 -12M652 43l0.5 -10M652 43l-7.5 -8M646.5 58.5l-7 -18M639.5 40.5l3 -13M639.5 40.5l-13.5 -10M646.5 58.5l-9.5 -11M637 47.5l-5 -11M637 47.5l-7 -8.5M637 47.5l-10.5 -3.5M646.5 58.5l-19.5 -2M627 56.5l-13.5 -10.5M627 56.5l-15.5 -3.5M627 56.5l-12 5M647.5 64.5l-10 -10.5M637.5 54l-3.5 -8.5M637.5 54l-8 -9M637.5 54l-12 -4M647.5 64.5l-16 -2.5M631.5 62l-10 -5M631.5 62l-11 1M642 57.5l-1.5 -15.5M640.5 42l3 -11.5M640.5 42l-0.5 -12.5M640.5 42l-8.5 -11.5M642 57.5l-13 -6M629 51.5l-6.5 -11.5M629 51.5l-13 0.5M633 66.5l-10 -12.5M623 54l-3 -11M623 54l-9.5 -7M633 66.5l-17 -1.5M616 65l-10 -7M616 65l-15.5 -0.5M616 65l-12.5 2.5M633.5 73.5l-9.5 -8.5M624 65l-3.5 -10.5M624 65l-10 -3M633.5 73.5l-15.5 5.5M618 79l-11.5 1.5M618 79l-10 5M618 79l-10 7M762.5 108l13 -4M775.5 104l12.5 2M775.5 104l10 -1.5M775.5 104l8 -7.5M762.5 108l8.5 -11M771 97l10 -5M771 97l6 -10M771 97l4.5 -10.5M750.5 104.5l8 -8M758.5 96.5l9 -2M758.5 96.5l6 -5.5M758.5 96.5l5 -9.5M750.5 104.5l0.5 -10M751 94.5l4.5 -6M751 94.5l0.5 -7M751 94.5l-2 -6.5M750.5 104.5l-4 -10.5M746.5 94l0.5 -7.5M746.5 94l-4 -7.5M746.5 94l-8 -6M756.5 108l11.5 -2.5M768 105.5l10 0M768 105.5l9 -3M768 105.5l7 -6.5M756.5 108l3 -11.5M759.5 96.5l5 -6.5M759.5 96.5l3 -8.5M759.5 96.5l-2 -9.5M743.5 102l4.5 -13.5M748 88.5l5.5 -7.5M748 88.5l5 -8.5M748 88.5l-1 -9.5M743.5 102l0.5 -13M744 89l3.5 -10M744 89l-2 -8M743.5 102l-3.5 -11M740 91l2.5 -8.5M740 91l-3.5 -8.5M740 91l-6.5 -6M737 103.5l10 -9.5M747 94l8.5 -5M747 94l6 -11M737 103.5l-2 -13M735 90.5l2 -9.5M735 90.5l-4 -11M735 90.5l-4 -11.5M725.5 107.5l-1.5 -11M724 96.5l3 -7M724 96.5l-1.5 -8M724 96.5l-3 -8M725.5 107.5l-6.5 -8.5M719 99l-0.5 -9.5M719 99l-6.5 -3M725.5 107.5l-10 -4.5M715.5 103l-5.5 -4.5M715.5 103l-7 -0.5M691.5 79l10.5 -14M702 65l14 -4.5M702 65l3 -15.5M691.5 79l-8.5 -17M683 62l1.5 -13.5M683 62l-5 -15M683 62l-10.5 -10.5M675 81l-1 -18.5M674 62.5l6.5 -11.5M674 62.5l1 -13.5M674 62.5l-7 -11M675 81l-8.5 -16.5M666.5 64.5l2 -14.5M666.5 64.5l-12 -8.5M675 81l-18 -10.5M657 70.5l-12.5 -14.5M657 70.5l-15.5 -8.5M657 70.5l-14 -1.5M675.5 97l3 -14M678.5 83l4 -9M678.5 83l0.5 -13M678.5 83l-1 -9.5M675.5 97l-4.5 -11.5M671 85.5l1 -9M671 85.5l-4.5 -7M671 85.5l-5.5 -7M675.5 97l-11 -10.5M664.5 86.5l-4 -13.5M664.5 86.5l-9.5 -9M664.5 86.5l-12.5 -2.5M660.5 109.5l-10.5 -11.5M650 98l-6 -12M650 98l-8 -11M650 98l-10.5 -2.5M660.5 109.5l-18 -1.5M642.5 108l-11 -4M642.5 108l-15 3M660.5 109.5l-15.5 0.5M645 110l-11 -3M645 110l-11.5 5M656 113l-9.5 -16.5M646.5 96.5l-2.5 -17M646.5 96.5l-15.5 -7M656 113l-16.5 -5.5M639.5 107.5l-12.5 -9M639.5 107.5l-11 -3.5M639.5 107.5l-12 3M646.5 126.5l-17.5 -12.5M629 114l-11.5 -14.5M629 114l-11.5 -10M629 114l-19.5 -3M646.5 126.5l-20 8.5M626.5 135l-19.5 1.5M626.5 135l-16 11M626.5 135l-8 11.5M649.5 128.5l-20 -6M629.5 122.5l-11.5 -8M629.5 122.5l-17 -5M629.5 122.5l-17 6M649.5 128.5l-14 9.5M635.5 138l-14 5M635.5 138l-12.5 9.5M635.5 138l-7.5 8.5M676 121.5l10 -2.5M686 119l7.5 2M686 119l8 -2.5M686 119l5 -5.5M676 121.5l7 -8.5M683 113l8.5 -4M683 113l3.5 -6M683 113l1 -7M666 109.5l9 -12M675 97.5l10.5 -4M675 97.5l8 -10M675 97.5l2 -13M666 109.5l-4 -15.5M662 94l2.5 -14.5M662 94l-1.5 -13.5M662 94l-9 -10M654 108.5l10 -12M664 96.5l12 -5.5M664 96.5l6 -13M654 108.5l-1 -12M653 96.5l4 -10.5M653 96.5l-1.5 -7.5M653 96.5l-4.5 -7M639.5 111l0.5 -13M640 98l3.5 -9.5M640 98l1.5 -11.5M640 98l-3 -11M639.5 111l-8 -8.5M631.5 102.5l-3.5 -9.5M631.5 102.5l-9 -5M632.5 121l7.5 -8.5M640 112.5l8.5 -5M640 112.5l1.5 -10M632.5 121l-0.5 -10.5M632 110.5l3.5 -6.5M632 110.5l-1.5 -8M632 110.5l-4.5 -8M625.5 122.5l0.5 -9.5M626 113l4 -7M626 113l1.5 -9M626 113l-3 -8M625.5 122.5l-3.5 -9M622 113.5l1 -8M622 113.5l-2 -7.5M622 113.5l-4.5 -6M625.5 122.5l-7 -4M618.5 118.5l-4 -4.5M618.5 118.5l-6.5 -2M608 135.5l-3.5 -7M604.5 128.5l0.5 -5.5M604.5 128.5l-2.5 -5M604.5 128.5l-5 -4.5M608 135.5l-9.5 -1.5M598.5 134l-7 -4.5M598.5 134l-7.5 -0.5M598.5 134l-7 1.5M600.5 142.5l-12 -4.5M588.5 138l-7 -7.5M588.5 138l-9.5 -4.5M588.5 138l-11 -1.5M600.5 142.5l-13 2M587.5 144.5l-10 -4.5M587.5 144.5l-8.5 8.5"/></g>
<path d="M655.5 200V112" stroke="#84907a" stroke-width="2"/>
<g fill="none" stroke="#2b2730" stroke-linecap="round" opacity="0.9"><path stroke-width="1.5" d="M446 33l9 10.5"/><path stroke-width="1.0" d="M455 43.5l0 10M455 43.5l8 3.5M470 33l4 11.5M474 44.5l-1 7M474 44.5l2 8.5M474 44.5l7 7.5M455 33l11.5 4"/><path stroke-width="0.5" d="M455 53.5l-2.5 7.5M452.5 61l-4 5M448.5 66l-5 2.5M448.5 66l0 4.5M452.5 61l0.5 5M453 66l-1.5 2.5M453 66l1 3M453 66l1 2.5M455 53.5l3.5 7M458.5 60.5l0 5.5M458.5 66l-2.5 2.5M458.5 66l2 3.5M458.5 60.5l3 4M461.5 64.5l0 3.5M461.5 64.5l2.5 4M461.5 64.5l3.5 0.5M458.5 60.5l4 2.5M462.5 63l2 2.5M462.5 63l4 1M462.5 63l3.5 -0.5M463 47l3 4.5M466 51.5l0.5 4M466.5 55.5l-1 2.5M466.5 55.5l1 2.5M466.5 55.5l2.5 2M466 51.5l3 1M469 52.5l1.5 2M469 52.5l2.5 1M469 52.5l3 -0.5M463 47l5 3M468 50l3.5 3.5M471.5 53.5l0.5 4M471.5 53.5l3.5 1.5M468 50l4 1M472 51l2.5 2.5M472 51l3 -1.5M463 47l7 -3M470 44l5.5 0M475.5 44l3.5 2.5M475.5 44l5 -1M475.5 44l3 -2M470 44l3 -5M473 39l4 -2.5M473 39l0.5 -5.5M473 51.5l-3.5 4M469.5 55.5l-3 1M466.5 56.5l-2.5 -0.5M466.5 56.5l-2 1.5M469.5 55.5l-1 3.5M468.5 59l-1.5 1.5M468.5 59l-0.5 2.5M468.5 59l1 2M473 51.5l2.5 5M475.5 56.5l-0.5 4M475 60.5l-2.5 2M475 60.5l1.5 2.5M475.5 56.5l3.5 1M479 57.5l2 2.5M479 57.5l3 0.5M479 57.5l2.5 -1M476 53l-1.5 6M474.5 59l-3.5 2.5M471 61.5l-3 -0.5M471 61.5l-1.5 2.5M474.5 59l-1.5 5M473 64l-2 3M473 64l1 4M474.5 59l1.5 4M476 63l0 3.5M476 63l1 4M476 63l2 3M476 53l5 4M481 57l2 3M483 60l1 3.5M483 60l1 2.5M483 60l3 1.5M481 57l4 2M485 59l2 2.5M485 59l3.5 -0.5M481 57l4.5 1M485.5 58l2 3M485.5 58l3.5 -1.5M481 52l2.5 8M483.5 60l-0.5 7.5M483 67.5l-4 4M483 67.5l2 4.5M483.5 60l4 4M487.5 64l1 3.5M487.5 64l3.5 4M487.5 64l3.5 1.5M481 52l5.5 5M486.5 57l2.5 5.5M489 62.5l0.5 5M489 62.5l1 4M489 62.5l3.5 2.5M486.5 57l4.5 4M491 61l1 5M491 61l4 1M486.5 57l4 2M490.5 59l3 2.5M490.5 59l3.5 0.5M481 52l7.5 3M488.5 55l2.5 5.5M491 60.5l-0.5 4.5M491 60.5l1 3.5M491 60.5l4.5 2M488.5 55l4.5 3.5M493 58.5l1.5 4.5M493 58.5l5 -0.5M488.5 55l5.5 -0.5M494 54.5l3 0.5M494 54.5l2 -2.5M466.5 37l5.5 7.5M472 44.5l-1 6M471 50.5l-3 2.5M471 50.5l2.5 3M472 44.5l6 4M478 48.5l1.5 4M478 48.5l4.5 1M466.5 37l10 -1M476.5 36l6 4.5M482.5 40.5l2.5 3.5M482.5 40.5l4.5 1M476.5 36l8 0M484.5 36l4.5 3M484.5 36l6 0M484.5 36l5.5 -3M476.5 36l4.5 -5M481 31l5 -2.5M481 31l3 -4M481 31l0.5 -4.5"/></g>
<g filter="url(#bl3)"><ellipse cx="278" cy="182" rx="30" ry="34" fill="#29271c"/><ellipse cx="300" cy="196" rx="16" ry="12" fill="#322f24"/></g>
<g filter="url(#tDark)"><ellipse cx="295" cy="110" rx="38" ry="50"/><ellipse cx="290" cy="170" rx="34" ry="40"/></g>
<polygon points="268,33 291,33 286,70 278,110 272,150 269,200 264,200 264,33" fill="#231e18"/>
<path d="M268 146C285 120 305 95 318 72C326 58 334 45 336 33" stroke="#3f3926" stroke-width="7.5" fill="none"/>
<path d="M268 146C285 120 305 95 318 72C326 58 334 45 336 33" stroke="#6a6242" stroke-width="2" fill="none" transform="translate(1.5 1)" opacity=".8"/>
<path d="M317 73C315 60 314 45 314 33" stroke="#3a3424" stroke-width="5" fill="none"/>
<g fill="none" stroke="#2a241e" stroke-linecap="round" opacity="0.9"><path stroke-width="1.5" d="M285 110l15 -5.5M280 125l18 1.5M275 140l17 6M272 150l19.5 -3.5M336 40l14 2.5M330 50l15 -5.5M290 70l16 -3M295 100l17.5 3M283 135l20 -1.5"/><path stroke-width="1.0" d="M300 104.5l13.5 5M300 104.5l9 -8.5M298 126.5l10.5 6M298 126.5l11.5 -1.5M298 126.5l15 -2M300 95l6 -10.5M306 84.5l8 -2.5M306 84.5l4 -7M306 84.5l0 -9.5M292 146l6.5 12M292 146l10.5 -5M291.5 146.5l11 7M291.5 146.5l15.5 -5M291.5 146.5l11 -7M290 60l-8.5 -5M281.5 55l-5 -7.5M281.5 55l-8 -2M310 80l-12 -2M298 78l-6 -6.5M298 78l-7.5 -2.5M298 78l-8.5 6.5M350 42.5l7.5 9.5M350 42.5l11 -4M345 44.5l10.5 -1M345 44.5l8 -10.5M314 40l-7.5 -6.5M284 80l8.5 -5M268 120l12 7M280 127l9 8M280 127l8 6.5M280 127l9.5 2M306 67l11 4.5M306 67l13 0M306 67l11 -7M312.5 103l9 10M312.5 103l16 0.5M312.5 103l14 -6.5M303 133.5l16 3.5M303 133.5l13 -9M300 85l11.5 -8M275 160l17.5 -4.5M305 110l12.5 6"/><path stroke-width="0.5" d="M313.5 109.5l6 10M319.5 119.5l2 8M321.5 127.5l-1.5 5.5M321.5 127.5l3 6M321.5 127.5l3.5 5M319.5 119.5l5 8.5M324.5 128l0 7M324.5 128l6.5 2M319.5 119.5l8.5 5M328 124.5l4.5 6.5M328 124.5l6 1M328 124.5l8 1M313.5 109.5l9.5 -0.5M323 109l5.5 3M328.5 112l2.5 4.5M328.5 112l4.5 3.5M328.5 112l4.5 -0.5M323 109l6.5 0.5M329.5 109.5l4.5 1.5M329.5 109.5l4 -3M323 109l4.5 -5.5M327.5 103.5l6 -2M327.5 103.5l2.5 -5M327.5 103.5l2.5 -6M309 96l7.5 0.5M316.5 96.5l4 3.5M320.5 100l1.5 3M320.5 100l2 2.5M320.5 100l3.5 -0.5M316.5 96.5l6.5 1M323 97.5l4.5 2.5M323 97.5l5 0.5M323 97.5l3.5 -1.5M316.5 96.5l4 -3.5M320.5 93l4 -1M320.5 93l1.5 -3.5M309 96l4.5 -8M313.5 88l7 -4M320.5 84l6 -1M320.5 84l4.5 -3M320.5 84l3.5 -5M313.5 88l-0.5 -6M313 82l1 -4M313 82l-2.5 -3M308.5 132.5l5.5 8.5M314 141l2.5 7M316.5 148l-0.5 5.5M316.5 148l0.5 7M316.5 148l6.5 3M314 141l6 4.5M320 145.5l3 5.5M320 145.5l5 1M308.5 132.5l10.5 3.5M319 136l5 4.5M324 140.5l2.5 4.5M324 140.5l5 3.5M324 140.5l5.5 0M319 136l6 3.5M325 139.5l3 4M325 139.5l5.5 0.5M319 136l7 0.5M326 136.5l4.5 2.5M326 136.5l5.5 -0.5M326 136.5l6 -1.5M308.5 132.5l10 0.5M318.5 133l4 5M322.5 138l0 5M322.5 138l5 1M318.5 133l6 -1M324.5 132l5.5 1M324.5 132l5 -2.5M324.5 132l3.5 -5M318.5 133l6.5 -4.5M325 128.5l6.5 -2M325 128.5l5.5 -3.5M325 128.5l1.5 -6.5M309.5 125l9 2M318.5 127l4.5 6.5M323 133.5l1 6M323 133.5l3 5M323 133.5l4.5 2.5M318.5 127l7.5 -2.5M326 124.5l6.5 0M326 124.5l5 -3.5M309.5 125l9 -4.5M318.5 120.5l7 0.5M325.5 121l3.5 3M325.5 121l4.5 -2.5M318.5 120.5l8.5 -2M327 118.5l5.5 1M327 118.5l3 -5.5M318.5 120.5l2.5 -8M321 112.5l5.5 -4.5M321 112.5l-3.5 -6.5M313 124.5l12 3M325 127.5l5 8.5M330 136l2 7M330 136l5.5 5.5M325 127.5l7.5 -0.5M332.5 127l5 1.5M332.5 127l5 -2M313 124.5l12 -5M325 119.5l8.5 3.5M333.5 123l5 5M333.5 123l6.5 -1.5M325 119.5l6.5 -5M331.5 114.5l5 -1.5M331.5 114.5l1 -6.5M313 124.5l10.5 -7M323.5 117.5l9.5 -2.5M333 115l6.5 2.5M333 115l7.5 -0.5M333 115l5.5 -5M323.5 117.5l7.5 -4M331 113.5l6 -1M331 113.5l5 -5M323.5 117.5l3.5 -9M327 108.5l5 -7M327 108.5l-1.5 -8.5M314 82l7 -0.5M321 81.5l5 1.5M321 81.5l4.5 -2M314 82l6.5 -1.5M320.5 80.5l4.5 0.5M320.5 80.5l4 -4.5M314 82l4.5 -3.5M318.5 78.5l4.5 0.5M318.5 78.5l2 -3M310 77.5l6 -2.5M316 75l5 0.5M316 75l5.5 -1M316 75l3 -4M310 77.5l-1 -6M309 71.5l2.5 -3.5M309 71.5l-1.5 -4M309 71.5l-3.5 -2.5M306 75l5 -5M311 70l4.5 -1.5M311 70l5.5 -3M311 70l2 -5.5M306 75l-1.5 -6M304.5 69l0.5 -5M304.5 69l-4.5 -4M306 75l-3 -6M303 69l-0.5 -5.5M303 69l-4 -1.5M298.5 158l-2 9.5M296.5 167.5l-6 5M290.5 172.5l-6 1.5M290.5 172.5l-4 5.5M296.5 167.5l4 7M300.5 174.5l-1.5 5M300.5 174.5l1 6M300.5 174.5l4.5 1.5M298.5 158l8 6.5M306.5 164.5l1 8.5M307.5 173l-3 5M307.5 173l2.5 6M307.5 173l2.5 4.5M306.5 164.5l4 7M310.5 171.5l0 6.5M310.5 171.5l7 2M306.5 164.5l8 -1M314.5 163.5l5.5 4M314.5 163.5l6.5 -1.5M314.5 163.5l5.5 -5M302.5 141l7.5 1M310 142l4 4.5M314 146.5l0 5M314 146.5l2.5 4.5M314 146.5l4.5 2.5M310 142l5 1M315 143l2 3M315 143l4 2M315 143l4 0M310 142l6.5 -1.5M316.5 140.5l5 2M316.5 140.5l3.5 -3.5M302.5 141l8 -4.5M310.5 136.5l7 -0.5M317.5 136l4 3.5M317.5 136l6 -0.5M317.5 136l4.5 -2M310.5 136.5l5.5 -6M316 130.5l6 -0.5M316 130.5l2.5 -6M316 130.5l2.5 -6M302.5 141l3.5 -8M306 133l6 -4M312 129l5 -1.5M312 129l3.5 -4.5M306 133l3 -5.5M309 127.5l4.5 -1.5M309 127.5l1 -5M306 133l-2 -6M304 127l0 -5M304 127l-2.5 -4M302.5 153.5l5 8.5M307.5 162l0.5 7.5M308 169.5l-2 5M308 169.5l2.5 4M307.5 162l7 1.5M314.5 163.5l3.5 4.5M314.5 163.5l6 1M314.5 163.5l5.5 0M302.5 153.5l9 -0.5M311.5 153l7.5 4M319 157l4 4M319 157l6 4M319 157l6 1.5M311.5 153l8 0.5M319.5 153.5l5.5 1.5M319.5 153.5l5.5 -1.5M319.5 153.5l5.5 -2M311.5 153l7.5 -3.5M319 149.5l6 2M319 149.5l3 -4.5M307 141.5l12 2M319 143.5l7 6M326 149.5l4 7M326 149.5l7 2M319 143.5l9.5 -4.5M328.5 139l8.5 -1.5M328.5 139l7 -3M328.5 139l3 -6M307 141.5l11.5 -3M318.5 138.5l7.5 4.5M326 143l4.5 4M326 143l7 1M318.5 138.5l7 -4.5M325.5 134l6.5 0M325.5 134l1.5 -5M307 141.5l9.5 -9M316.5 132.5l8.5 -2.5M325 130l7.5 -0.5M325 130l6.5 -2M325 130l5 -3.5M316.5 132.5l9.5 -6.5M326 126l8 -2M326 126l3 -7.5M316.5 132.5l6 -8.5M322.5 124l8 -4M322.5 124l4.5 -5.5M322.5 124l2 -7.5M302.5 139.5l9 1.5M311.5 141l5.5 6M317 147l0.5 6.5M317 147l5 3M317 147l4.5 2.5M311.5 141l5.5 2.5M317 143.5l3.5 3M317 143.5l4.5 -0.5M311.5 141l6 -3.5M317.5 137.5l6 -0.5M317.5 137.5l2 -6M302.5 139.5l8 -3M310.5 136.5l6 -0.5M316.5 136l3.5 1.5M316.5 136l2.5 -2M310.5 136.5l7 -1M317.5 135.5l6 1M317.5 135.5l4 -4.5M310.5 136.5l4 -6M314.5 130.5l6 -1.5M314.5 130.5l0.5 -6.5M302.5 139.5l4.5 -8M307 131.5l6 -3M313 128.5l6.5 1.5M313 128.5l5 -1.5M313 128.5l4 -3M307 131.5l4 -5.5M311 126l4 -2M311 126l3 -5M311 126l-1 -6M307 131.5l0 -7.5M307 124l3 -4M307 124l-2 -6M276.5 47.5l-1 -7.5M275.5 40l3 -4M275.5 40l-2 -5.5M276.5 47.5l-5 -3M271.5 44.5l-3 -3M271.5 44.5l-3 -2.5M271.5 44.5l-4.5 0M273.5 53l-6 -3.5M267.5 49.5l-2 -5.5M267.5 49.5l-4 -2.5M267.5 49.5l-5 0M273.5 53l-6 3.5M267.5 56.5l-6 2M267.5 56.5l-4.5 2M267.5 56.5l-3.5 3.5M292 71.5l-0.5 -6M291.5 65.5l1 -4M291.5 65.5l-1.5 -4.5M291.5 65.5l-2.5 -4M292 71.5l-7 -3M285 68.5l-4.5 -4M285 68.5l-4.5 1.5M290.5 75.5l-4 -6M286.5 69.5l0.5 -5.5M286.5 69.5l-5 -3.5M290.5 75.5l-7 -0.5M283.5 75l-4 -3.5M283.5 75l-3.5 3M290.5 75.5l-6.5 3.5M284 79l-4.5 -1M284 79l-3.5 3.5M289.5 84.5l-8.5 3.5M281 88l-7 0.5M281 88l-7 4M281 88l-4.5 4M289.5 84.5l-6.5 4.5M283 89l-5 -0.5M283 89l-4 4.5M289.5 84.5l-4 7M285.5 91.5l-5.5 2M285.5 91.5l-2 6.5M285.5 91.5l1 5.5M357.5 52l0.5 8M358 60l-2 6M358 60l2 5.5M358 60l3.5 5M357.5 52l7 7.5M364.5 59.5l-0.5 8.5M364.5 59.5l7 1M357.5 52l6.5 5M364 57l0.5 6M364 57l5 3.5M364 57l5.5 1M361 38.5l7.5 4M368.5 42.5l3.5 6M368.5 42.5l7.5 0M361 38.5l8 -6M369 32.5l6 0.5M369 32.5l3 -6M355.5 43.5l8 2M363.5 45.5l4.5 3M368 48.5l3.5 3.5M368 48.5l4 2M368 48.5l4.5 -0.5M363.5 45.5l5 0.5M368.5 46l3 3M368.5 46l5 -1M363.5 45.5l6.5 -0.5M370 45l5 1M370 45l3.5 -2.5M355.5 43.5l5 -5M360.5 38.5l5 -2.5M365.5 36l3.5 -0.5M365.5 36l3 -2M365.5 36l2.5 -3.5M360.5 38.5l0 -6M360.5 32.5l1 -3.5M360.5 32.5l-2.5 -4.5M353 34l8.5 -2.5M361.5 31.5l6 3M367.5 34.5l4 3.5M367.5 34.5l4.5 -0.5M361.5 31.5l4.5 -6M366 25.5l6.5 -2M366 25.5l1 -6.5M353 34l1.5 -11.5M354.5 22.5l7 -4.5M361.5 18l6 -0.5M361.5 18l1.5 -7M354.5 22.5l-0.5 -7.5M354 15l1 -5.5M354 15l-2.5 -4.5M354.5 22.5l-1 -10M353.5 12.5l3 -7M353.5 12.5l-5.5 -5.5M306.5 33.5l-1.5 -7M305 26.5l1.5 -5.5M306.5 21l3 -3.5M306.5 21l-0.5 -5M305 26.5l-3 -5M302 21.5l1 -5M302 21.5l-4.5 -2M306.5 33.5l-5 -4.5M301.5 29l-0.5 -5.5M301 23.5l1 -4.5M301 23.5l-0.5 -3.5M301 23.5l-1.5 -3.5M301.5 29l-4.5 -2.5M297 26.5l-1 -3.5M297 26.5l-4 0.5M306.5 33.5l-9 -1.5M297.5 32l-4.5 -3.5M293 28.5l-0.5 -5M293 28.5l-3.5 -2M293 28.5l-4 -1.5M297.5 32l-6 2.5M291.5 34.5l-5.5 -1.5M291.5 34.5l-4 4M292.5 75l7 0.5M299.5 75.5l5 1.5M304.5 77l3 3M304.5 77l4 0M299.5 75.5l6 0.5M305.5 76l3.5 2M305.5 76l5 -0.5M305.5 76l3.5 -2M299.5 75.5l4.5 -2M304 73.5l3.5 1M304 73.5l3.5 -2.5M292.5 75l5.5 -5.5M298 69.5l5 -1M303 68.5l3.5 0.5M303 68.5l2.5 -3.5M298 69.5l3.5 -4.5M301.5 65l4.5 -2M301.5 65l0.5 -4.5M298 69.5l1 -5.5M299 64l3 -3M299 64l1 -4M299 64l-1 -4.5M289 135l4 7M293 142l-0.5 6.5M293 142l6.5 3M289 135l4.5 8M293.5 143l-1.5 6.5M293.5 143l7 3.5M289 135l8 2M297 137l5 3.5M297 137l7 -0.5M288 133.5l4 5.5M292 139l0 4.5M292 139l4 3.5M288 133.5l5.5 4M293.5 137.5l4 5M293.5 137.5l4 4.5M293.5 137.5l6.5 -1M288 133.5l8.5 -1M296.5 132.5l7 3.5M296.5 132.5l6.5 0M296.5 132.5l6 -3.5M289.5 129l6 3M295.5 132l1.5 5M295.5 132l4 2.5M295.5 132l5.5 -1M289.5 129l6 -2M295.5 127l5.5 1.5M295.5 127l4 -3M317 71.5l3.5 7.5M320.5 79l0 7.5M320.5 86.5l-3 3.5M320.5 86.5l0 5M320.5 86.5l3.5 5M320.5 79l5 4M325.5 83l2 3.5M325.5 83l3.5 1.5M325.5 83l5 -1M317 71.5l7.5 1M324.5 72.5l5 2M329.5 74.5l3.5 2.5M329.5 74.5l3.5 0M324.5 72.5l5.5 -0.5M330 72l4 0.5M330 72l2.5 -2.5M324.5 72.5l5 -2M329.5 70.5l3.5 1.5M329.5 70.5l4.5 -0.5M329.5 70.5l2 -3M319 67l8.5 8.5M327.5 75.5l1.5 9M329 84.5l-3 4.5M329 84.5l1 6M329 84.5l2.5 5M327.5 75.5l6 6.5M333.5 82l4 6M333.5 82l5.5 5M333.5 82l6 2.5M327.5 75.5l8.5 3M336 78.5l4 5M336 78.5l8 -1M319 67l9.5 -2M328.5 65l8 2.5M336.5 67.5l4.5 4M336.5 67.5l5.5 -2M328.5 65l5 -3M333.5 62l4 -0.5M333.5 62l3 -3M333.5 62l1.5 -5.5M319 67l9.5 -5M328.5 62l9.5 2.5M338 64.5l6 4M338 64.5l7 -1M328.5 62l2 -8M330.5 54l3 -4.5M330.5 54l2.5 -5.5M330.5 54l0 -6.5M317 60l8.5 -2M325.5 58l6 3.5M331.5 61.5l3 3.5M331.5 61.5l5 1M325.5 58l3.5 -5.5M329 52.5l4.5 -4M329 52.5l0.5 -5M317 60l8 -6M325 54l6 -0.5M331 53.5l5 2.5M331 53.5l3.5 -3M325 54l5.5 -6.5M330.5 47.5l7 -1.5M330.5 47.5l0 -7M325 54l2 -6.5M327 47.5l4 -4M327 47.5l1.5 -4M327 47.5l-0.5 -5M317 60l6 -7.5M323 52.5l6.5 -4M329.5 48.5l7 0.5M329.5 48.5l2 -4.5M323 52.5l5.5 -6M328.5 46.5l7.5 -0.5M328.5 46.5l0 -6.5M323 52.5l0 -7M323 45.5l3 -4M323 45.5l-4 -5M321.5 113l1.5 11.5M323 124.5l-3.5 8.5M319.5 133l-5 3.5M319.5 133l0.5 5.5M323 124.5l0.5 9.5M323.5 134l-3 6.5M323.5 134l-2 6.5M323.5 134l3 6.5M323 124.5l5.5 4.5M328.5 129l3 5M328.5 129l3 4M328.5 129l6 2.5M321.5 113l5 7M326.5 120l-0.5 5.5M326 125.5l-2 4.5M326 125.5l0 4.5M326 125.5l1.5 4M326.5 120l3 6.5M329.5 126.5l0 6M329.5 126.5l1 5M329.5 126.5l6 2.5M326.5 120l6 1.5M332.5 121.5l3 4M332.5 121.5l5 0M321.5 113l11 3M332.5 116l5 7.5M337.5 123.5l2 7.5M337.5 123.5l6 4M332.5 116l8 0.5M340.5 116.5l4.5 2.5M340.5 116.5l4.5 -4.5M332.5 116l9.5 -3M342 113l8.5 3M342 113l4.5 -5M328.5 103.5l11 6.5M339.5 110l4 8M343.5 118l-0.5 7.5M343.5 118l1 6.5M343.5 118l5.5 2M339.5 110l9.5 -0.5M349 109.5l4.5 4M349 109.5l6.5 0.5M349 109.5l5.5 -5.5M328.5 103.5l10 -0.5M338.5 103l5 5M343.5 108l1.5 5M343.5 108l4 3M343.5 108l4 2.5M338.5 103l8 0M346.5 103l4.5 3.5M346.5 103l3 -3.5M338.5 103l6 -3.5M344.5 99.5l6 -1M344.5 99.5l5.5 -2M344.5 99.5l4.5 -4M328.5 103.5l9 -9.5M337.5 94l9.5 -1.5M347 92.5l7.5 1M347 92.5l7.5 -0.5M347 92.5l3.5 -6M337.5 94l3.5 -7.5M341 86.5l4 -4.5M341 86.5l4 -5M341 86.5l1.5 -6M326.5 96.5l11 4.5M337.5 101l6 5M343.5 106l2.5 4.5M343.5 106l4 2M343.5 106l4.5 1.5M337.5 101l8.5 -2.5M346 98.5l6 1.5M346 98.5l4.5 -4M326.5 96.5l10.5 -2.5M337 94l6 3M343 97l2.5 5M343 97l5 0.5M337 94l9 0M346 94l5.5 6M346 94l7 -1M346 94l5 -3.5M337 94l7 -4.5M344 89.5l7 -2.5M344 89.5l5 -4.5M326.5 96.5l4.5 -8.5M331 88l6 -4M337 84l6 0.5M337 84l1 -4.5M331 88l-0.5 -7M330.5 81l4 -4.5M330.5 81l1.5 -5.5M330.5 81l-3 -5.5M319 137l8.5 10M327.5 147l4.5 11M332 158l-3.5 8M332 158l3.5 9M332 158l6 6M327.5 147l8 6.5M335.5 153.5l2.5 7M335.5 153.5l7.5 4.5M335.5 153.5l7.5 0.5M327.5 147l8 4.5M335.5 151.5l4 4.5M335.5 151.5l6 -1.5M319 137l11.5 7M330.5 144l7.5 7M338 151l3 8.5M338 151l9 1.5M330.5 144l10.5 -2M341 142l6.5 5M341 142l6 -4M319 137l8.5 -6M327.5 131l8 -1.5M335.5 129.5l5.5 1.5M335.5 129.5l6 -1.5M335.5 129.5l3 -4.5M327.5 131l4.5 -6.5M332 124.5l4 -4.5M332 124.5l-0.5 -7M316 124.5l10 -1.5M326 123l6.5 5M332.5 128l1 6M332.5 128l4 3M332.5 128l5 2M326 123l6.5 -4.5M332.5 118.5l5.5 0.5M332.5 118.5l2.5 -5M316 124.5l8 -9M324 115.5l10.5 -1M334.5 114.5l7.5 4M334.5 114.5l5 -4.5M324 115.5l5.5 -6M329.5 109.5l6 -3M329.5 109.5l1.5 -6M324 115.5l4 -9.5M328 106l6.5 -4.5M328 106l2.5 -7.5M328 106l0 -9.5M311.5 77l12.5 0.5M324 77.5l7 8M331 85.5l1 7M332 92.5l-1 5M332 92.5l3.5 3M331 85.5l6 4.5M337 90l3 5M337 90l5.5 -0.5M331 85.5l8 2.5M339 88l4 5.5M339 88l6.5 -1M324 77.5l6.5 -5M330.5 72.5l6.5 -2.5M337 70l5 0.5M337 70l2.5 -5.5M330.5 72.5l6 -4.5M336.5 68l5.5 0M336.5 68l5 -2.5M336.5 68l1.5 -5M330.5 72.5l2 -6M332.5 66.5l5 -2M332.5 66.5l-2 -4.5M311.5 77l5 -9M316.5 68l7 -4.5M323.5 63.5l5.5 -2M329 61.5l4 1M329 61.5l4.5 -0.5M329 61.5l1 -3.5M323.5 63.5l5 -6M328.5 57.5l4.5 -3.5M328.5 57.5l3 -4.5M328.5 57.5l-0.5 -5M323.5 63.5l1.5 -6M325 57.5l3 -2.5M325 57.5l-1 -4M316.5 68l-1 -7M315.5 61l2.5 -4M318 57l3.5 -1M318 57l0.5 -4M315.5 61l-3.5 -3M312 58l-1.5 -2.5M312 58l-3 0M292.5 155.5l13 8M305.5 163.5l3 9.5M308.5 173l-3 7.5M305.5 180.5l-5.5 2.5M305.5 180.5l-1 6M305.5 180.5l1.5 6.5M308.5 173l2 8.5M310.5 181.5l-3 5M310.5 181.5l4 4M308.5 173l7 3.5M315.5 176.5l2.5 4.5M315.5 176.5l4 3M315.5 176.5l6.5 1M305.5 163.5l6 7.5M311.5 171l-0.5 6.5M311 177.5l-3.5 4M311 177.5l-1.5 4.5M311 177.5l3 4.5M311.5 171l6 2M317.5 173l2.5 4M317.5 173l5 3M317.5 173l5.5 -0.5M305.5 163.5l12.5 0.5M318 164l6 6.5M324 170.5l-0.5 5.5M324 170.5l6.5 0.5M318 164l9 3M327 167l5.5 5M327 167l6.5 -1M318 164l9 -4.5M327 159.5l8.5 1.5M327 159.5l6 -5.5M292.5 155.5l12 -10.5M304.5 145l13.5 -2.5M318 142.5l8 2.5M326 145l5.5 4M326 145l5.5 0.5M318 142.5l9 -0.5M327 142l6 4M327 142l6.5 -5M318 142.5l5.5 -6.5M323.5 136l5 -3M323.5 136l4 -6.5M323.5 136l0 -7.5M304.5 145l6 -11.5M310.5 133.5l7 -7.5M317.5 126l8 0M317.5 126l5 -4M317.5 126l3.5 -5.5M310.5 133.5l4 -11M314.5 122.5l6 -5.5M314.5 122.5l2 -9.5M314.5 122.5l-1 -7.5M310.5 133.5l-1 -8M309.5 125.5l2.5 -6.5M309.5 125.5l-1 -5.5M309.5 125.5l-5 -4.5M317.5 116l4.5 9.5M322 125.5l-3 6.5M319 132l-4.5 2.5M319 132l1 4.5M322 125.5l5.5 5M327.5 130.5l0 5.5M327.5 130.5l5.5 1.5M317.5 116l9.5 3M327 119l4 6M331 125l0.5 4.5M331 125l3.5 3.5M331 125l4.5 1.5M327 119l8 -2.5M335 116.5l5.5 3M335 116.5l6 -0.5M335 116.5l3.5 -5M317.5 116l11 -4M328.5 112l8.5 -0.5M337 111.5l5.5 4.5M337 111.5l6.5 -1.5M337 111.5l7.5 -2.5M328.5 112l9.5 -2M338 110l7 3.5M338 110l6.5 -1.5M338 110l4 -6.5M328.5 112l3 -6.5M331.5 105.5l3.5 -3.5M331.5 105.5l1 -5.5M331.5 105.5l-3 -5.5"/></g>
</svg><!--/PHOTO-->
<div id="main"></div>
<div id="nav">
<a style="top:0px">Unsere Gemeinde</a><a style="top:22px">Terminkalender</a><a style="top:43px">Gemeindebrief</a><a style="top:65px">Gottesdienste</a><a style="top:87px">Lebensfeste</a><a style="top:108px">Kirchenmusik</a><a style="top:130px">Gruppen und Kreise</a><a style="top:152px">Kinder und Familie</a><a style="top:173px">Jugend</a><a style="top:195px">Senioren</a><a style="top:217px">Erwachsenenbildung</a><a style="top:238px">Diakonie</a><a style="top:260px">Kinderhaus Andreas</a>
</div>
<h1 style="top:218px">Willkommen in der Andreaskirche!</h1>
<div id="intro">
<p style="padding-left:75px">Auf unserer Website finden Sie</p>
<p style="padding-left:75px">Neuigkeiten und <a>Termine</a> aus dem</p>
<p style="padding-left:75px">Gemeindeleben, Vorschau und</p>
<p style="padding-left:75px"><a>Nachlese</a> unserer Veranstaltungen,</p>
<p>Informationen zu <a>Kasualien und Festanlässen</a>,</p>
<p>Näheres zu unseren <a>Gruppen und Kreisen</a>, einen</p>
<p>Überblick über die Aktivitäten in der <a>Kirchenmusik</a></p>
<p>und vieles andere mehr ...</p>
</div>
<a style="position:absolute;left:629px;top:418px;font-size:11.7px">Weiterlesen</a>
<h1 style="top:451px">Ökumenischer Berggottesdienst 2018</h1>

<svg id="xlogo" style="position:absolute;left:300px;top:258px" width="70" height="60" viewBox="300 258 70 60">
<rect x="303.8" y="262" width="31.7" height="51.6" fill="#b2b2b2"/>
<polygon points="305.5,271.8 314.2,262 335.5,279 335.5,296.5 314.2,313.6 305.5,303.6 324.5,287.7" fill="#fff"/>
<polygon points="336,279 356.4,262.3 365,271.8 345.4,287.7 365,303.6 356.4,313.2 336,297" fill="#b2b2b2"/>
</svg>
<svg id="circ" style="position:absolute;left:600px;top:260px" width="100" height="95" viewBox="600 260 100 95" font-family="'Liberation Sans',Arial,sans-serif" font-weight="bold" font-size="10" fill="#33240c">
<ellipse cx="648.8" cy="307.1" rx="40.5" ry="38.9" fill="#fcc41d" stroke="#0a0805" stroke-width="4.4"/>
<text x="617.7" y="302.8" textLength="63.4" lengthAdjust="spacingAndGlyphs">Flüchtlingen</text>
<text x="628.5" y="317.7" textLength="45" lengthAdjust="spacingAndGlyphs">helfen ...</text>
</svg>
<div id="flyer">
<svg width="377" height="200" viewBox="298 491 377 200" style="position:absolute;left:-1px;top:-1px">
<defs><linearGradient id="mtn" x1="0" y1="0" x2="1" y2="0"><stop offset="0" stop-color="#fff"/><stop offset=".55" stop-color="#eef3f8"/><stop offset="1" stop-color="#d9e5f1"/></linearGradient></defs>
<g font-family="'Liberation Sans',Arial,sans-serif" font-size="6.9" fill="#2e2e2e" text-anchor="middle" stroke="#2e2e2e" stroke-width=".15">
<text x="540.5" y="515.8" textLength="116" lengthAdjust="spacingAndGlyphs">Pfarrverband Fürstenried-Maxhof</text>
<text x="375.6" y="562.6" textLength="88" lengthAdjust="spacingAndGlyphs">Evang. Kirchengemeinde</text>
<text x="375.6" y="570.7" textLength="50" lengthAdjust="spacingAndGlyphs">Andreaskirche</text>
<text x="488" y="566.8" textLength="41" lengthAdjust="spacingAndGlyphs">St. Matthias</text>
<text x="589.2" y="567" textLength="78.5" lengthAdjust="spacingAndGlyphs">Wiederkunft des Herrn</text>
</g>
<g id="draw1" fill="#111" stroke="none">
<path d="M346.3 547.200L346.5 508L349.8 503L350.3 503L354.3 508L354.8 547.200Z"/>
<path d="M347.5 524H353.600V546.200H347.5Z" fill="#fff"/>
<path d="M348.5 527l2 1M349 531l3 2M348.5 536l2.5 1.5M349 541l2.5 1" stroke="#999" stroke-width=".8" fill="none"/>
<path d="M353 546.800L355 543L364.5 539.5L364.7 541.5L358 547Z"/>
<path d="M354 546.800H399" stroke="#111" stroke-width="1.2" fill="none"/>
<rect x="361.2" y="534.6" width="5.6" height="11" fill="#fff" stroke="#222" stroke-width=".7"/><circle cx="364" cy="538.5" r=".8"/>
<path d="M367.4 544.5V535L373.7 531.800L380 534.5V544.5Z"/>
<path d="M380 532H392.600L394.6 535.800L387 536.5L380 534.5Z"/>
<rect x="380.6" y="533.5" width="6.3" height="13" fill="#fff" stroke="#222" stroke-width=".7"/><circle cx="383.4" cy="536.6" r=".9"/>
<rect x="387.3" y="537.3" width="8.8" height="9.3" fill="#fff" stroke="#777" stroke-width=".7"/>
<path d="M381 524.600Q398 522 407 526.5Q412.5 530 409.8 535" fill="none" stroke="#222" stroke-width=".9"/>
<path d="M357.5 527.200Q372 520.5 391 519.2" fill="none" stroke="#aaa" stroke-width=".7"/>
<path d="M398 541.5L401.5 536L403 533.5L409.5 532.5L409 536L405 537L408.5 538.5L404 542L400.5 543.5Z" fill="#222"/>
<path d="M396.5 546l3 -3l5.5 -1.5" stroke="#333" stroke-width="1" fill="none"/>
</g>
<g id="draw2" fill="#0c0c0c">
<rect x="453" y="524.8" width="5.6" height="23.6"/>
<path d="M458.5 539.5L461 538.5L468.4 540.5V549H458.5Z"/>
<path d="M452.5 548.400H519V549.300H452.5Z"/>
<path d="M472.5 531.5Q478 525.5 490 521.5L495.5 521.5L496 523.5L509.8 524.400V535L513 534L514.5 532.5L516 534L521.5 535V548.5H490V540H472.5Z"/>
<path d="M473.3 532.800Q478 528.5 484.5 527L485 540H473.300Z" fill="#fff"/>
<path d="M490.5 538L494.5 547.5L492.5 548L490.2 542Z" fill="#fff"/>
<path d="M501 524.5L502.2 524.5L511.8 538L510.5 538.5Z" fill="#fff"/>
<path d="M470.5 544.5H472V549H470.5ZM473.5 544.5H475.5V549H473.5Z"/>
<path d="M463.5 541V548" stroke="#fff" stroke-width=".6"/>
</g>
<g id="draw3" fill="none" stroke="#1a1a1a">
<path d="M552.5 526H617" stroke="#444" stroke-width="2"/>
<path d="M553 528H617" stroke="#111" stroke-width="2"/>
<path d="M605 527.5H616V530.800H605Z" fill="#111" stroke="none"/>
<path d="M565 529V549.5M578 529V549.5M590.5 529V549.5M603 529V549.5M615.5 529V546" stroke-width="1.4"/>
<path d="M570 540.5H607" stroke="#777" stroke-width=".9"/><path d="M604 536H615.5" stroke="#777" stroke-width=".8"/>
<path d="M565 548.5H604" stroke="#888" stroke-width=".8" stroke-dasharray="5 2"/>
<path d="M571 549V540.5H577" stroke="#888" stroke-width=".7"/>
<path d="M553 542H564" stroke="#bbb" stroke-width=".7"/>
<path d="M545.5 548L546 541.5L549 539H552.5V548Z" fill="#0c0c0c" stroke="none"/>
<path d="M612 524q1-3 4-3.5q3-1.5 5 .5M620 524q3 2 1 4.5q-1 2 1.5 3.5q2 1.5 0 3.5l-3 1.5M626 531l2.5.8M628 536.5l3.5-.5M624 541q2-2 4.5-1q1 2-1.5 3.5l-3 2l-2.5 2.5M628 545l2-1" stroke-width="1"/>
<path d="M616 522l2-1.5l2 1.5l2-1l1.5 2.5M620 526.5l2.5 1l-1 2.5l2 1.5M623 534l2.5-1.5l1.5 2M619 538l3 1l2-1.5l2.5 1.5M622 543.5l2.5-2l2 1M618 547l2-1.5" stroke-width=".9"/>
</g>
<g transform="translate(328 636.2) scale(1 2.86)"><text x="0" y="0" font-family="'Liberation Serif','Times New Roman',serif" font-size="18.1" fill="#4a6e98" stroke="#4a6e98" stroke-width=".15" textLength="331.8" lengthAdjust="spacingAndGlyphs">Ökumenischer Berggottesdienst auf der Biber</text></g>
<g font-family="'DejaVu Sans',Verdana,sans-serif" font-weight="bold" font-size="13.7" fill="#111">
<text x="535.2" y="671.2" textLength="94" lengthAdjust="spacingAndGlyphs">am Samstag,</text>
<text x="529.4" y="688.4" textLength="106.2" lengthAdjust="spacingAndGlyphs">15. September</text>
</g>
<rect x="481" y="668" width="39" height="20" fill="url(#mtn)"/>
<path d="M487 682l3-1.5l2 1M494 680l4-2l2 1.5l3-2.5M519.5 676v6" stroke="#b9c6d6" stroke-width=".9" fill="none"/>
</svg>
</div>
<div class="side">
<h3 style="top:225px">Tageslosung</h3>
<div class="los" style="top:251px">Bekehre du mich, so will ich<br>mich bekehren; denn du,<br>HERR, bist mein Gott!</div>
<div class="ref" style="top:302px">Jeremia 31,18</div>
<div class="los" style="top:328px">Erneuert euch in eurem Geist<br>und Sinn.</div>
<div class="ref" style="top:363px">Epheser 4,23</div>
<h3 style="top:398px">Highlights</h3>
<div class="hl" style="top:418.7px">So, 23.9. 17 Uhr<br><a>Schlosskonzert des</a><br><a>Instrumental-Ensembles der</a><br><a>Andreaskirche</a><br>zum Ausklang des Tags der<br>offenen Tür in Schloss<br>Fürstenried - Michael Pfeiffer<br>Schloss Fürstenried<hr>So, 14.10. 11:15 Uhr<br><a>Orgelmatinée</a> - Michael Pfeiffer<br>Andreaskirche<hr>Fr, 16.11. 18 Uhr - So, 18.11.<br>13 Uhr<br><a>Andreas Kultur-Herbst 2018</a><br>Ein Basar tausender Bücher,<br>garniert mit<br>Musikveranstaltungen,<br>Unterhaltung und Café-Betrieb</div>
</div>
<div id="cookie">
<p>Mit der Nutzung unserer Website erklären Sie sich damit einverstanden,<br>dass wir Cookies verwenden.</p>
<a>Weitere Informationen zum Datenschutz</a>
<b>Ja, ich bin einverstanden.</b>
</div>
</div>
</body>
</html>
